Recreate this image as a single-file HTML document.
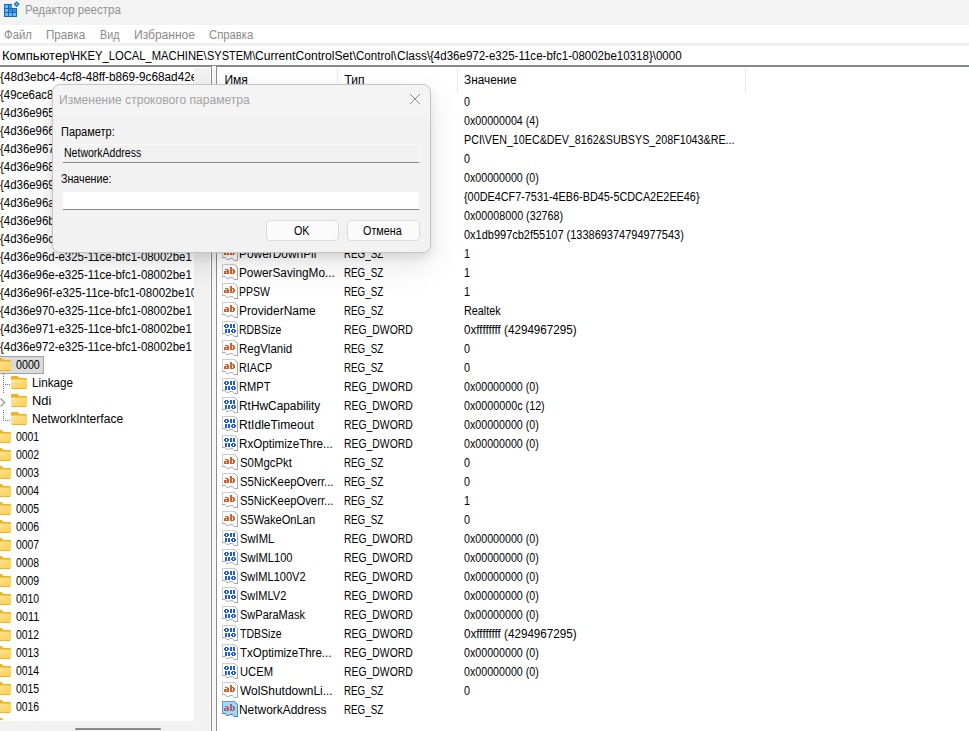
<!DOCTYPE html>
<html><head><meta charset="utf-8">
<style>
*{margin:0;padding:0;box-sizing:border-box}
html,body{width:969px;height:731px;overflow:hidden;background:#fff}
body{position:relative;font-family:"Liberation Sans",sans-serif;color:#000}
.a{position:absolute}
.t{position:absolute;white-space:nowrap;transform-origin:0 0;line-height:1}
#title{left:0;top:0;width:969px;height:25px;background:#f3f3f3}
#menu{left:0;top:25px;width:969px;height:18px;background:#fff}
#gap{left:0;top:43px;width:969px;height:3px;background:#f0f0f0}
#addr{left:0;top:46px;width:969px;height:19px;background:#fff}
#addrline{left:0;top:65px;width:969px;height:2px;background:#87888c}
#tree{left:0;top:67px;width:211px;height:664px;background:#fff}
#treestrip{left:194px;top:68px;width:16px;height:663px;background:#f2f2f2}
#treebot{left:0;top:721px;width:210px;height:10px;background:#f2f2f2}
#split1{left:211px;top:66px;width:1px;height:665px;background:#8c8c8f}
#split2{left:212px;top:66px;width:4px;height:665px;background:#f7f7f7}
#split3{left:216px;top:66px;width:1px;height:665px;background:#8c8c8f}
#list{left:217px;top:67px;width:752px;height:664px;background:#fff}
.tr{font-size:12.5px;transform:scaleX(.9)}
.ln{font-size:12.5px;transform:scaleX(.9)}
.lv{font-size:11.5px;transform:scaleX(.94)}
.hd{font-size:12px}
.sep{position:absolute;top:68px;width:1px;height:24px;background:#e6e9e9}
</style></head><body>
<svg width="0" height="0" style="position:absolute"><defs><linearGradient id="fg" x1="0" y1="0" x2="1" y2="1"><stop offset="0" stop-color="#fde4a0"/><stop offset="0.45" stop-color="#fcdc80"/><stop offset="0.55" stop-color="#fcd76a"/><stop offset="1" stop-color="#fbd25c"/></linearGradient></defs></svg>
<div id="title" class="a"></div>
<svg class="a" style="left:0;top:0" width="22" height="20" viewBox="0 0 22 20" shape-rendering="crispEdges">
 <path d="M4 4 H12 V8 H17 V17 H4 Z" fill="#0f6dc0"/>
 <rect x="5" y="5" width="3" height="3" fill="#6cb6f2"/><rect x="9" y="5" width="3" height="3" fill="#3f90da"/>
 <rect x="5" y="9" width="3" height="3" fill="#6cb6f2"/><rect x="9" y="9" width="3" height="3" fill="#3f90da"/><rect x="13" y="9" width="3" height="3" fill="#3f90da"/>
 <rect x="5" y="13" width="3" height="3" fill="#6cb6f2"/><rect x="9" y="13" width="3" height="3" fill="#6cb6f2"/><rect x="13" y="13" width="3" height="3" fill="#6cb6f2"/>
 <path d="M16.6 1.3 L19.6 4.3 L16.6 7.3 L13.6 4.3 Z" fill="#0f6dc0" shape-rendering="geometricPrecision"/>
 <path d="M16.6 2.8 L18.1 4.3 L16.6 5.8 L15.1 4.3 Z" fill="#6cb6f2" shape-rendering="geometricPrecision"/>
</svg>
<div id="menu" class="a"></div>
<div id="gap" class="a"></div>
<div id="addr" class="a"></div>
<div id="addrline" class="a"></div>
<div id="tree" class="a"></div>
<div id="treestrip" class="a"></div>
<div id="treebot" class="a"></div>
<div id="split1" class="a"></div>
<div id="split2" class="a"></div>
<div id="split3" class="a"></div>
<div id="list" class="a"></div>
<div class="a" style="left:0;top:67px;width:193.5px;height:654px;overflow:hidden"><div class="t" style="left:0.20px;top:4px;font-size:12.5px;transform:scaleX(0.9408);color:#000">{48d3ebc4-4cf8-48ff-b869-9c68ad42e</div>
<div class="t" style="left:0.20px;top:22px;font-size:12.5px;transform:scaleX(0.9146);color:#000">{49ce6ac8-6f86-11d2-b1e5-0080c72e7</div>
<div class="t" style="left:0.20px;top:40px;font-size:12.5px;transform:scaleX(0.9146);color:#000">{4d36e965-e325-11ce-bfc1-08002be1</div>
<div class="t" style="left:0.20px;top:58px;font-size:12.5px;transform:scaleX(0.9146);color:#000">{4d36e966-e325-11ce-bfc1-08002be1</div>
<div class="t" style="left:0.20px;top:76px;font-size:12.5px;transform:scaleX(0.9146);color:#000">{4d36e967-e325-11ce-bfc1-08002be1</div>
<div class="t" style="left:0.20px;top:94px;font-size:12.5px;transform:scaleX(0.9146);color:#000">{4d36e968-e325-11ce-bfc1-08002be1</div>
<div class="t" style="left:0.20px;top:112px;font-size:12.5px;transform:scaleX(0.9146);color:#000">{4d36e969-e325-11ce-bfc1-08002be1</div>
<div class="t" style="left:0.20px;top:130px;font-size:12.5px;transform:scaleX(0.9146);color:#000">{4d36e96a-e325-11ce-bfc1-08002be1</div>
<div class="t" style="left:0.20px;top:148px;font-size:12.5px;transform:scaleX(0.9146);color:#000">{4d36e96b-e325-11ce-bfc1-08002be1</div>
<div class="t" style="left:0.20px;top:166px;font-size:12.5px;transform:scaleX(0.9146);color:#000">{4d36e96c-e325-11ce-bfc1-08002be1</div>
<div class="t" style="left:0.20px;top:184px;font-size:12.5px;transform:scaleX(0.9146);color:#000">{4d36e96d-e325-11ce-bfc1-08002be1</div>
<div class="t" style="left:0.20px;top:202px;font-size:12.5px;transform:scaleX(0.9146);color:#000">{4d36e96e-e325-11ce-bfc1-08002be1</div>
<div class="t" style="left:0.20px;top:220px;font-size:12.5px;transform:scaleX(0.9255);color:#000">{4d36e96f-e325-11ce-bfc1-08002be10</div>
<div class="t" style="left:0.20px;top:238px;font-size:12.5px;transform:scaleX(0.9146);color:#000">{4d36e970-e325-11ce-bfc1-08002be1</div>
<div class="t" style="left:0.20px;top:256px;font-size:12.5px;transform:scaleX(0.9146);color:#000">{4d36e971-e325-11ce-bfc1-08002be1</div>
<div class="t" style="left:0.20px;top:274px;font-size:12.5px;transform:scaleX(0.9146);color:#000">{4d36e972-e325-11ce-bfc1-08002be1</div></div>
<div class="a" style="left:0px;top:356px;width:44px;height:18px;background:#dadada;border:1px solid #a3a3a3;border-left:none"></div>
<svg class="a" style="left:-5px;top:358px" width="16" height="13" viewBox="0 0 16 13"><path d="M0 1.2 Q0 0 1.2 0 H6.6 L8.4 1.9 H15 Q16 1.9 16 2.9 V4 H0Z" fill="#f0b21e"/><rect x="0" y="3.4" width="16" height="9" rx="0.8" fill="url(#fg)"/><rect x="0.8" y="12" width="14.4" height="1" fill="#efb425"/><rect x="1" y="4.2" width="3" height="1" fill="#fff4c4"/></svg>
<svg class="a" style="left:11px;top:376px" width="16" height="13" viewBox="0 0 16 13"><path d="M0 1.2 Q0 0 1.2 0 H6.6 L8.4 1.9 H15 Q16 1.9 16 2.9 V4 H0Z" fill="#f0b21e"/><rect x="0" y="3.4" width="16" height="9" rx="0.8" fill="url(#fg)"/><rect x="0.8" y="12" width="14.4" height="1" fill="#efb425"/><rect x="1" y="4.2" width="3" height="1" fill="#fff4c4"/></svg>
<svg class="a" style="left:11px;top:394px" width="16" height="13" viewBox="0 0 16 13"><path d="M0 1.2 Q0 0 1.2 0 H6.6 L8.4 1.9 H15 Q16 1.9 16 2.9 V4 H0Z" fill="#f0b21e"/><rect x="0" y="3.4" width="16" height="9" rx="0.8" fill="url(#fg)"/><rect x="0.8" y="12" width="14.4" height="1" fill="#efb425"/><rect x="1" y="4.2" width="3" height="1" fill="#fff4c4"/></svg>
<svg class="a" style="left:11px;top:412px" width="16" height="13" viewBox="0 0 16 13"><path d="M0 1.2 Q0 0 1.2 0 H6.6 L8.4 1.9 H15 Q16 1.9 16 2.9 V4 H0Z" fill="#f0b21e"/><rect x="0" y="3.4" width="16" height="9" rx="0.8" fill="url(#fg)"/><rect x="0.8" y="12" width="14.4" height="1" fill="#efb425"/><rect x="1" y="4.2" width="3" height="1" fill="#fff4c4"/></svg>
<svg class="a" style="left:-5px;top:430px" width="16" height="13" viewBox="0 0 16 13"><path d="M0 1.2 Q0 0 1.2 0 H6.6 L8.4 1.9 H15 Q16 1.9 16 2.9 V4 H0Z" fill="#f0b21e"/><rect x="0" y="3.4" width="16" height="9" rx="0.8" fill="url(#fg)"/><rect x="0.8" y="12" width="14.4" height="1" fill="#efb425"/><rect x="1" y="4.2" width="3" height="1" fill="#fff4c4"/></svg>
<svg class="a" style="left:-5px;top:448px" width="16" height="13" viewBox="0 0 16 13"><path d="M0 1.2 Q0 0 1.2 0 H6.6 L8.4 1.9 H15 Q16 1.9 16 2.9 V4 H0Z" fill="#f0b21e"/><rect x="0" y="3.4" width="16" height="9" rx="0.8" fill="url(#fg)"/><rect x="0.8" y="12" width="14.4" height="1" fill="#efb425"/><rect x="1" y="4.2" width="3" height="1" fill="#fff4c4"/></svg>
<svg class="a" style="left:-5px;top:466px" width="16" height="13" viewBox="0 0 16 13"><path d="M0 1.2 Q0 0 1.2 0 H6.6 L8.4 1.9 H15 Q16 1.9 16 2.9 V4 H0Z" fill="#f0b21e"/><rect x="0" y="3.4" width="16" height="9" rx="0.8" fill="url(#fg)"/><rect x="0.8" y="12" width="14.4" height="1" fill="#efb425"/><rect x="1" y="4.2" width="3" height="1" fill="#fff4c4"/></svg>
<svg class="a" style="left:-5px;top:484px" width="16" height="13" viewBox="0 0 16 13"><path d="M0 1.2 Q0 0 1.2 0 H6.6 L8.4 1.9 H15 Q16 1.9 16 2.9 V4 H0Z" fill="#f0b21e"/><rect x="0" y="3.4" width="16" height="9" rx="0.8" fill="url(#fg)"/><rect x="0.8" y="12" width="14.4" height="1" fill="#efb425"/><rect x="1" y="4.2" width="3" height="1" fill="#fff4c4"/></svg>
<svg class="a" style="left:-5px;top:502px" width="16" height="13" viewBox="0 0 16 13"><path d="M0 1.2 Q0 0 1.2 0 H6.6 L8.4 1.9 H15 Q16 1.9 16 2.9 V4 H0Z" fill="#f0b21e"/><rect x="0" y="3.4" width="16" height="9" rx="0.8" fill="url(#fg)"/><rect x="0.8" y="12" width="14.4" height="1" fill="#efb425"/><rect x="1" y="4.2" width="3" height="1" fill="#fff4c4"/></svg>
<svg class="a" style="left:-5px;top:520px" width="16" height="13" viewBox="0 0 16 13"><path d="M0 1.2 Q0 0 1.2 0 H6.6 L8.4 1.9 H15 Q16 1.9 16 2.9 V4 H0Z" fill="#f0b21e"/><rect x="0" y="3.4" width="16" height="9" rx="0.8" fill="url(#fg)"/><rect x="0.8" y="12" width="14.4" height="1" fill="#efb425"/><rect x="1" y="4.2" width="3" height="1" fill="#fff4c4"/></svg>
<svg class="a" style="left:-5px;top:538px" width="16" height="13" viewBox="0 0 16 13"><path d="M0 1.2 Q0 0 1.2 0 H6.6 L8.4 1.9 H15 Q16 1.9 16 2.9 V4 H0Z" fill="#f0b21e"/><rect x="0" y="3.4" width="16" height="9" rx="0.8" fill="url(#fg)"/><rect x="0.8" y="12" width="14.4" height="1" fill="#efb425"/><rect x="1" y="4.2" width="3" height="1" fill="#fff4c4"/></svg>
<svg class="a" style="left:-5px;top:556px" width="16" height="13" viewBox="0 0 16 13"><path d="M0 1.2 Q0 0 1.2 0 H6.6 L8.4 1.9 H15 Q16 1.9 16 2.9 V4 H0Z" fill="#f0b21e"/><rect x="0" y="3.4" width="16" height="9" rx="0.8" fill="url(#fg)"/><rect x="0.8" y="12" width="14.4" height="1" fill="#efb425"/><rect x="1" y="4.2" width="3" height="1" fill="#fff4c4"/></svg>
<svg class="a" style="left:-5px;top:574px" width="16" height="13" viewBox="0 0 16 13"><path d="M0 1.2 Q0 0 1.2 0 H6.6 L8.4 1.9 H15 Q16 1.9 16 2.9 V4 H0Z" fill="#f0b21e"/><rect x="0" y="3.4" width="16" height="9" rx="0.8" fill="url(#fg)"/><rect x="0.8" y="12" width="14.4" height="1" fill="#efb425"/><rect x="1" y="4.2" width="3" height="1" fill="#fff4c4"/></svg>
<svg class="a" style="left:-5px;top:592px" width="16" height="13" viewBox="0 0 16 13"><path d="M0 1.2 Q0 0 1.2 0 H6.6 L8.4 1.9 H15 Q16 1.9 16 2.9 V4 H0Z" fill="#f0b21e"/><rect x="0" y="3.4" width="16" height="9" rx="0.8" fill="url(#fg)"/><rect x="0.8" y="12" width="14.4" height="1" fill="#efb425"/><rect x="1" y="4.2" width="3" height="1" fill="#fff4c4"/></svg>
<svg class="a" style="left:-5px;top:610px" width="16" height="13" viewBox="0 0 16 13"><path d="M0 1.2 Q0 0 1.2 0 H6.6 L8.4 1.9 H15 Q16 1.9 16 2.9 V4 H0Z" fill="#f0b21e"/><rect x="0" y="3.4" width="16" height="9" rx="0.8" fill="url(#fg)"/><rect x="0.8" y="12" width="14.4" height="1" fill="#efb425"/><rect x="1" y="4.2" width="3" height="1" fill="#fff4c4"/></svg>
<svg class="a" style="left:-5px;top:628px" width="16" height="13" viewBox="0 0 16 13"><path d="M0 1.2 Q0 0 1.2 0 H6.6 L8.4 1.9 H15 Q16 1.9 16 2.9 V4 H0Z" fill="#f0b21e"/><rect x="0" y="3.4" width="16" height="9" rx="0.8" fill="url(#fg)"/><rect x="0.8" y="12" width="14.4" height="1" fill="#efb425"/><rect x="1" y="4.2" width="3" height="1" fill="#fff4c4"/></svg>
<svg class="a" style="left:-5px;top:646px" width="16" height="13" viewBox="0 0 16 13"><path d="M0 1.2 Q0 0 1.2 0 H6.6 L8.4 1.9 H15 Q16 1.9 16 2.9 V4 H0Z" fill="#f0b21e"/><rect x="0" y="3.4" width="16" height="9" rx="0.8" fill="url(#fg)"/><rect x="0.8" y="12" width="14.4" height="1" fill="#efb425"/><rect x="1" y="4.2" width="3" height="1" fill="#fff4c4"/></svg>
<svg class="a" style="left:-5px;top:664px" width="16" height="13" viewBox="0 0 16 13"><path d="M0 1.2 Q0 0 1.2 0 H6.6 L8.4 1.9 H15 Q16 1.9 16 2.9 V4 H0Z" fill="#f0b21e"/><rect x="0" y="3.4" width="16" height="9" rx="0.8" fill="url(#fg)"/><rect x="0.8" y="12" width="14.4" height="1" fill="#efb425"/><rect x="1" y="4.2" width="3" height="1" fill="#fff4c4"/></svg>
<svg class="a" style="left:-5px;top:682px" width="16" height="13" viewBox="0 0 16 13"><path d="M0 1.2 Q0 0 1.2 0 H6.6 L8.4 1.9 H15 Q16 1.9 16 2.9 V4 H0Z" fill="#f0b21e"/><rect x="0" y="3.4" width="16" height="9" rx="0.8" fill="url(#fg)"/><rect x="0.8" y="12" width="14.4" height="1" fill="#efb425"/><rect x="1" y="4.2" width="3" height="1" fill="#fff4c4"/></svg>
<svg class="a" style="left:-5px;top:700px" width="16" height="13" viewBox="0 0 16 13"><path d="M0 1.2 Q0 0 1.2 0 H6.6 L8.4 1.9 H15 Q16 1.9 16 2.9 V4 H0Z" fill="#f0b21e"/><rect x="0" y="3.4" width="16" height="9" rx="0.8" fill="url(#fg)"/><rect x="0.8" y="12" width="14.4" height="1" fill="#efb425"/><rect x="1" y="4.2" width="3" height="1" fill="#fff4c4"/></svg>
<div class="a" style="left:0;top:718px;width:20px;height:2px;overflow:hidden"><svg class="a" style="left:-5px;top:0px" width="16" height="13" viewBox="0 0 16 13"><path d="M0 1.2 Q0 0 1.2 0 H6.6 L8.4 1.9 H15 Q16 1.9 16 2.9 V4 H0Z" fill="#f0b21e"/><rect x="0" y="3.4" width="16" height="9" rx="0.8" fill="url(#fg)"/><rect x="0.8" y="12" width="14.4" height="1" fill="#efb425"/><rect x="1" y="4.2" width="3" height="1" fill="#fff4c4"/></svg></div>
<div class="a" style="left:3px;top:374px;width:1px;height:1px;background:#7d7383"></div><div class="a" style="left:3px;top:376px;width:1px;height:1px;background:#7d7383"></div><div class="a" style="left:3px;top:378px;width:1px;height:1px;background:#7d7383"></div><div class="a" style="left:3px;top:380px;width:1px;height:1px;background:#7d7383"></div><div class="a" style="left:3px;top:382px;width:1px;height:1px;background:#7d7383"></div><div class="a" style="left:3px;top:384px;width:1px;height:1px;background:#7d7383"></div><div class="a" style="left:3px;top:386px;width:1px;height:1px;background:#7d7383"></div><div class="a" style="left:3px;top:388px;width:1px;height:1px;background:#7d7383"></div><div class="a" style="left:3px;top:390px;width:1px;height:1px;background:#7d7383"></div><div class="a" style="left:3px;top:392px;width:1px;height:1px;background:#7d7383"></div><div class="a" style="left:5px;top:384px;width:1px;height:1px;background:#7d7383"></div><div class="a" style="left:7px;top:384px;width:1px;height:1px;background:#7d7383"></div><div class="a" style="left:9px;top:384px;width:1px;height:1px;background:#7d7383"></div>
<div class="a" style="left:3px;top:410px;width:1px;height:1px;background:#7d7383"></div><div class="a" style="left:3px;top:412px;width:1px;height:1px;background:#7d7383"></div><div class="a" style="left:3px;top:414px;width:1px;height:1px;background:#7d7383"></div><div class="a" style="left:3px;top:416px;width:1px;height:1px;background:#7d7383"></div><div class="a" style="left:3px;top:418px;width:1px;height:1px;background:#7d7383"></div><div class="a" style="left:3px;top:420px;width:1px;height:1px;background:#7d7383"></div><div class="a" style="left:5px;top:420px;width:1px;height:1px;background:#7d7383"></div><div class="a" style="left:7px;top:420px;width:1px;height:1px;background:#7d7383"></div><div class="a" style="left:9px;top:420px;width:1px;height:1px;background:#7d7383"></div>
<svg class="a" style="left:-1px;top:397px" width="8" height="11" viewBox="0 0 8 11"><path d="M1.5 1.5 L5.5 5.5 L1.5 9.5" fill="none" stroke="#9a9a9a" stroke-width="1.4"/></svg>
<svg class="a" style="left:222px;top:93px" width="17" height="17" viewBox="0 0 17 17"><path d="M0 0 H13 L16 3 V16 H12 L10.5 14 H8 L6.5 15 H4.5 L3 13 H0 Z" fill="#fff"/><path d="M0.5 13 V0.5 H12.5 M12.5 0.5 L15.5 3.5 V16" fill="none" stroke="#cdcdcd" stroke-width="1"/><path d="M15.5 3.5 V15.8" fill="none" stroke="#a9a9a9" stroke-width="1"/><path d="M0 12.5 H3.2 L4.7 14.5 H6.6 L8.1 13.5 H10.6 L12.1 15.5 H16" fill="none" stroke="#a9a9a9" stroke-width="1"/><path d="M12.5 0.5 L15.5 3.5" fill="none" stroke="#a9a9a9" stroke-width="1"/><g shape-rendering="crispEdges"><rect x="3" y="5" width="3" height="1" fill="#dc5c27"/><rect x="5" y="6" width="2" height="1" fill="#dc5c27"/><rect x="2" y="7" width="5" height="1" fill="#dc5c27"/><rect x="2" y="8" width="2" height="1" fill="#dc5c27"/><rect x="5" y="8" width="2" height="1" fill="#dc5c27"/><rect x="3" y="9" width="4" height="1" fill="#dc5c27"/><rect x="2" y="9" width="1" height="1" fill="#dc5c27"/><rect x="8" y="3" width="2" height="1" fill="#dc5c27"/><rect x="8" y="4" width="2" height="1" fill="#dc5c27"/><rect x="8" y="5" width="4" height="1" fill="#dc5c27"/><rect x="8" y="6" width="2" height="1" fill="#dc5c27"/><rect x="11" y="6" width="2" height="1" fill="#dc5c27"/><rect x="8" y="7" width="2" height="1" fill="#dc5c27"/><rect x="11" y="7" width="2" height="1" fill="#dc5c27"/><rect x="8" y="8" width="2" height="1" fill="#dc5c27"/><rect x="11" y="8" width="2" height="1" fill="#dc5c27"/><rect x="8" y="9" width="4" height="1" fill="#dc5c27"/></g></svg>
<svg class="a" style="left:222px;top:112px" width="17" height="17" viewBox="0 0 17 17"><path d="M0 0 H13 L16 3 V16 H12 L10.5 14 H8 L6.5 15 H4.5 L3 13 H0 Z" fill="#fff"/><path d="M0.5 13 V0.5 H12.5 M12.5 0.5 L15.5 3.5 V16" fill="none" stroke="#cdcdcd" stroke-width="1"/><path d="M15.5 3.5 V15.8" fill="none" stroke="#a9a9a9" stroke-width="1"/><path d="M0 12.5 H3.2 L4.7 14.5 H6.6 L8.1 13.5 H10.6 L12.1 15.5 H16" fill="none" stroke="#a9a9a9" stroke-width="1"/><path d="M12.5 0.5 L15.5 3.5" fill="none" stroke="#a9a9a9" stroke-width="1"/><g shape-rendering="crispEdges"><rect x="3" y="3" width="3" height="1" fill="#1f5ce0"/><rect x="8" y="3" width="2" height="1" fill="#1f5ce0"/><rect x="11" y="3" width="2" height="1" fill="#1f5ce0"/><rect x="2" y="4" width="2" height="1" fill="#1f5ce0"/><rect x="5" y="4" width="2" height="1" fill="#1f5ce0"/><rect x="8" y="4" width="2" height="1" fill="#1f5ce0"/><rect x="11" y="4" width="2" height="1" fill="#1f5ce0"/><rect x="2" y="5" width="2" height="1" fill="#1f5ce0"/><rect x="5" y="5" width="2" height="1" fill="#1f5ce0"/><rect x="8" y="5" width="2" height="1" fill="#1f5ce0"/><rect x="11" y="5" width="2" height="1" fill="#1f5ce0"/><rect x="3" y="6" width="3" height="1" fill="#1f5ce0"/><rect x="8" y="6" width="2" height="1" fill="#1f5ce0"/><rect x="11" y="6" width="2" height="1" fill="#1f5ce0"/><rect x="3" y="8" width="2" height="1" fill="#1f5ce0"/><rect x="6" y="8" width="2" height="1" fill="#1f5ce0"/><rect x="10" y="8" width="3" height="1" fill="#1f5ce0"/><rect x="3" y="9" width="2" height="1" fill="#1f5ce0"/><rect x="6" y="9" width="2" height="1" fill="#1f5ce0"/><rect x="9" y="9" width="2" height="1" fill="#1f5ce0"/><rect x="12" y="9" width="2" height="1" fill="#1f5ce0"/><rect x="3" y="10" width="2" height="1" fill="#1f5ce0"/><rect x="6" y="10" width="2" height="1" fill="#1f5ce0"/><rect x="9" y="10" width="2" height="1" fill="#1f5ce0"/><rect x="12" y="10" width="2" height="1" fill="#1f5ce0"/><rect x="3" y="11" width="2" height="1" fill="#1f5ce0"/><rect x="6" y="11" width="2" height="1" fill="#1f5ce0"/><rect x="10" y="11" width="3" height="1" fill="#1f5ce0"/></g></svg>
<svg class="a" style="left:222px;top:131px" width="17" height="17" viewBox="0 0 17 17"><path d="M0 0 H13 L16 3 V16 H12 L10.5 14 H8 L6.5 15 H4.5 L3 13 H0 Z" fill="#fff"/><path d="M0.5 13 V0.5 H12.5 M12.5 0.5 L15.5 3.5 V16" fill="none" stroke="#cdcdcd" stroke-width="1"/><path d="M15.5 3.5 V15.8" fill="none" stroke="#a9a9a9" stroke-width="1"/><path d="M0 12.5 H3.2 L4.7 14.5 H6.6 L8.1 13.5 H10.6 L12.1 15.5 H16" fill="none" stroke="#a9a9a9" stroke-width="1"/><path d="M12.5 0.5 L15.5 3.5" fill="none" stroke="#a9a9a9" stroke-width="1"/><g shape-rendering="crispEdges"><rect x="3" y="5" width="3" height="1" fill="#dc5c27"/><rect x="5" y="6" width="2" height="1" fill="#dc5c27"/><rect x="2" y="7" width="5" height="1" fill="#dc5c27"/><rect x="2" y="8" width="2" height="1" fill="#dc5c27"/><rect x="5" y="8" width="2" height="1" fill="#dc5c27"/><rect x="3" y="9" width="4" height="1" fill="#dc5c27"/><rect x="2" y="9" width="1" height="1" fill="#dc5c27"/><rect x="8" y="3" width="2" height="1" fill="#dc5c27"/><rect x="8" y="4" width="2" height="1" fill="#dc5c27"/><rect x="8" y="5" width="4" height="1" fill="#dc5c27"/><rect x="8" y="6" width="2" height="1" fill="#dc5c27"/><rect x="11" y="6" width="2" height="1" fill="#dc5c27"/><rect x="8" y="7" width="2" height="1" fill="#dc5c27"/><rect x="11" y="7" width="2" height="1" fill="#dc5c27"/><rect x="8" y="8" width="2" height="1" fill="#dc5c27"/><rect x="11" y="8" width="2" height="1" fill="#dc5c27"/><rect x="8" y="9" width="4" height="1" fill="#dc5c27"/></g></svg>
<svg class="a" style="left:222px;top:150px" width="17" height="17" viewBox="0 0 17 17"><path d="M0 0 H13 L16 3 V16 H12 L10.5 14 H8 L6.5 15 H4.5 L3 13 H0 Z" fill="#fff"/><path d="M0.5 13 V0.5 H12.5 M12.5 0.5 L15.5 3.5 V16" fill="none" stroke="#cdcdcd" stroke-width="1"/><path d="M15.5 3.5 V15.8" fill="none" stroke="#a9a9a9" stroke-width="1"/><path d="M0 12.5 H3.2 L4.7 14.5 H6.6 L8.1 13.5 H10.6 L12.1 15.5 H16" fill="none" stroke="#a9a9a9" stroke-width="1"/><path d="M12.5 0.5 L15.5 3.5" fill="none" stroke="#a9a9a9" stroke-width="1"/><g shape-rendering="crispEdges"><rect x="3" y="5" width="3" height="1" fill="#dc5c27"/><rect x="5" y="6" width="2" height="1" fill="#dc5c27"/><rect x="2" y="7" width="5" height="1" fill="#dc5c27"/><rect x="2" y="8" width="2" height="1" fill="#dc5c27"/><rect x="5" y="8" width="2" height="1" fill="#dc5c27"/><rect x="3" y="9" width="4" height="1" fill="#dc5c27"/><rect x="2" y="9" width="1" height="1" fill="#dc5c27"/><rect x="8" y="3" width="2" height="1" fill="#dc5c27"/><rect x="8" y="4" width="2" height="1" fill="#dc5c27"/><rect x="8" y="5" width="4" height="1" fill="#dc5c27"/><rect x="8" y="6" width="2" height="1" fill="#dc5c27"/><rect x="11" y="6" width="2" height="1" fill="#dc5c27"/><rect x="8" y="7" width="2" height="1" fill="#dc5c27"/><rect x="11" y="7" width="2" height="1" fill="#dc5c27"/><rect x="8" y="8" width="2" height="1" fill="#dc5c27"/><rect x="11" y="8" width="2" height="1" fill="#dc5c27"/><rect x="8" y="9" width="4" height="1" fill="#dc5c27"/></g></svg>
<svg class="a" style="left:222px;top:169px" width="17" height="17" viewBox="0 0 17 17"><path d="M0 0 H13 L16 3 V16 H12 L10.5 14 H8 L6.5 15 H4.5 L3 13 H0 Z" fill="#fff"/><path d="M0.5 13 V0.5 H12.5 M12.5 0.5 L15.5 3.5 V16" fill="none" stroke="#cdcdcd" stroke-width="1"/><path d="M15.5 3.5 V15.8" fill="none" stroke="#a9a9a9" stroke-width="1"/><path d="M0 12.5 H3.2 L4.7 14.5 H6.6 L8.1 13.5 H10.6 L12.1 15.5 H16" fill="none" stroke="#a9a9a9" stroke-width="1"/><path d="M12.5 0.5 L15.5 3.5" fill="none" stroke="#a9a9a9" stroke-width="1"/><g shape-rendering="crispEdges"><rect x="3" y="3" width="3" height="1" fill="#1f5ce0"/><rect x="8" y="3" width="2" height="1" fill="#1f5ce0"/><rect x="11" y="3" width="2" height="1" fill="#1f5ce0"/><rect x="2" y="4" width="2" height="1" fill="#1f5ce0"/><rect x="5" y="4" width="2" height="1" fill="#1f5ce0"/><rect x="8" y="4" width="2" height="1" fill="#1f5ce0"/><rect x="11" y="4" width="2" height="1" fill="#1f5ce0"/><rect x="2" y="5" width="2" height="1" fill="#1f5ce0"/><rect x="5" y="5" width="2" height="1" fill="#1f5ce0"/><rect x="8" y="5" width="2" height="1" fill="#1f5ce0"/><rect x="11" y="5" width="2" height="1" fill="#1f5ce0"/><rect x="3" y="6" width="3" height="1" fill="#1f5ce0"/><rect x="8" y="6" width="2" height="1" fill="#1f5ce0"/><rect x="11" y="6" width="2" height="1" fill="#1f5ce0"/><rect x="3" y="8" width="2" height="1" fill="#1f5ce0"/><rect x="6" y="8" width="2" height="1" fill="#1f5ce0"/><rect x="10" y="8" width="3" height="1" fill="#1f5ce0"/><rect x="3" y="9" width="2" height="1" fill="#1f5ce0"/><rect x="6" y="9" width="2" height="1" fill="#1f5ce0"/><rect x="9" y="9" width="2" height="1" fill="#1f5ce0"/><rect x="12" y="9" width="2" height="1" fill="#1f5ce0"/><rect x="3" y="10" width="2" height="1" fill="#1f5ce0"/><rect x="6" y="10" width="2" height="1" fill="#1f5ce0"/><rect x="9" y="10" width="2" height="1" fill="#1f5ce0"/><rect x="12" y="10" width="2" height="1" fill="#1f5ce0"/><rect x="3" y="11" width="2" height="1" fill="#1f5ce0"/><rect x="6" y="11" width="2" height="1" fill="#1f5ce0"/><rect x="10" y="11" width="3" height="1" fill="#1f5ce0"/></g></svg>
<svg class="a" style="left:222px;top:188px" width="17" height="17" viewBox="0 0 17 17"><path d="M0 0 H13 L16 3 V16 H12 L10.5 14 H8 L6.5 15 H4.5 L3 13 H0 Z" fill="#fff"/><path d="M0.5 13 V0.5 H12.5 M12.5 0.5 L15.5 3.5 V16" fill="none" stroke="#cdcdcd" stroke-width="1"/><path d="M15.5 3.5 V15.8" fill="none" stroke="#a9a9a9" stroke-width="1"/><path d="M0 12.5 H3.2 L4.7 14.5 H6.6 L8.1 13.5 H10.6 L12.1 15.5 H16" fill="none" stroke="#a9a9a9" stroke-width="1"/><path d="M12.5 0.5 L15.5 3.5" fill="none" stroke="#a9a9a9" stroke-width="1"/><g shape-rendering="crispEdges"><rect x="3" y="5" width="3" height="1" fill="#dc5c27"/><rect x="5" y="6" width="2" height="1" fill="#dc5c27"/><rect x="2" y="7" width="5" height="1" fill="#dc5c27"/><rect x="2" y="8" width="2" height="1" fill="#dc5c27"/><rect x="5" y="8" width="2" height="1" fill="#dc5c27"/><rect x="3" y="9" width="4" height="1" fill="#dc5c27"/><rect x="2" y="9" width="1" height="1" fill="#dc5c27"/><rect x="8" y="3" width="2" height="1" fill="#dc5c27"/><rect x="8" y="4" width="2" height="1" fill="#dc5c27"/><rect x="8" y="5" width="4" height="1" fill="#dc5c27"/><rect x="8" y="6" width="2" height="1" fill="#dc5c27"/><rect x="11" y="6" width="2" height="1" fill="#dc5c27"/><rect x="8" y="7" width="2" height="1" fill="#dc5c27"/><rect x="11" y="7" width="2" height="1" fill="#dc5c27"/><rect x="8" y="8" width="2" height="1" fill="#dc5c27"/><rect x="11" y="8" width="2" height="1" fill="#dc5c27"/><rect x="8" y="9" width="4" height="1" fill="#dc5c27"/></g></svg>
<svg class="a" style="left:222px;top:207px" width="17" height="17" viewBox="0 0 17 17"><path d="M0 0 H13 L16 3 V16 H12 L10.5 14 H8 L6.5 15 H4.5 L3 13 H0 Z" fill="#fff"/><path d="M0.5 13 V0.5 H12.5 M12.5 0.5 L15.5 3.5 V16" fill="none" stroke="#cdcdcd" stroke-width="1"/><path d="M15.5 3.5 V15.8" fill="none" stroke="#a9a9a9" stroke-width="1"/><path d="M0 12.5 H3.2 L4.7 14.5 H6.6 L8.1 13.5 H10.6 L12.1 15.5 H16" fill="none" stroke="#a9a9a9" stroke-width="1"/><path d="M12.5 0.5 L15.5 3.5" fill="none" stroke="#a9a9a9" stroke-width="1"/><g shape-rendering="crispEdges"><rect x="3" y="3" width="3" height="1" fill="#1f5ce0"/><rect x="8" y="3" width="2" height="1" fill="#1f5ce0"/><rect x="11" y="3" width="2" height="1" fill="#1f5ce0"/><rect x="2" y="4" width="2" height="1" fill="#1f5ce0"/><rect x="5" y="4" width="2" height="1" fill="#1f5ce0"/><rect x="8" y="4" width="2" height="1" fill="#1f5ce0"/><rect x="11" y="4" width="2" height="1" fill="#1f5ce0"/><rect x="2" y="5" width="2" height="1" fill="#1f5ce0"/><rect x="5" y="5" width="2" height="1" fill="#1f5ce0"/><rect x="8" y="5" width="2" height="1" fill="#1f5ce0"/><rect x="11" y="5" width="2" height="1" fill="#1f5ce0"/><rect x="3" y="6" width="3" height="1" fill="#1f5ce0"/><rect x="8" y="6" width="2" height="1" fill="#1f5ce0"/><rect x="11" y="6" width="2" height="1" fill="#1f5ce0"/><rect x="3" y="8" width="2" height="1" fill="#1f5ce0"/><rect x="6" y="8" width="2" height="1" fill="#1f5ce0"/><rect x="10" y="8" width="3" height="1" fill="#1f5ce0"/><rect x="3" y="9" width="2" height="1" fill="#1f5ce0"/><rect x="6" y="9" width="2" height="1" fill="#1f5ce0"/><rect x="9" y="9" width="2" height="1" fill="#1f5ce0"/><rect x="12" y="9" width="2" height="1" fill="#1f5ce0"/><rect x="3" y="10" width="2" height="1" fill="#1f5ce0"/><rect x="6" y="10" width="2" height="1" fill="#1f5ce0"/><rect x="9" y="10" width="2" height="1" fill="#1f5ce0"/><rect x="12" y="10" width="2" height="1" fill="#1f5ce0"/><rect x="3" y="11" width="2" height="1" fill="#1f5ce0"/><rect x="6" y="11" width="2" height="1" fill="#1f5ce0"/><rect x="10" y="11" width="3" height="1" fill="#1f5ce0"/></g></svg>
<svg class="a" style="left:222px;top:226px" width="17" height="17" viewBox="0 0 17 17"><path d="M0 0 H13 L16 3 V16 H12 L10.5 14 H8 L6.5 15 H4.5 L3 13 H0 Z" fill="#fff"/><path d="M0.5 13 V0.5 H12.5 M12.5 0.5 L15.5 3.5 V16" fill="none" stroke="#cdcdcd" stroke-width="1"/><path d="M15.5 3.5 V15.8" fill="none" stroke="#a9a9a9" stroke-width="1"/><path d="M0 12.5 H3.2 L4.7 14.5 H6.6 L8.1 13.5 H10.6 L12.1 15.5 H16" fill="none" stroke="#a9a9a9" stroke-width="1"/><path d="M12.5 0.5 L15.5 3.5" fill="none" stroke="#a9a9a9" stroke-width="1"/><g shape-rendering="crispEdges"><rect x="3" y="3" width="3" height="1" fill="#1f5ce0"/><rect x="8" y="3" width="2" height="1" fill="#1f5ce0"/><rect x="11" y="3" width="2" height="1" fill="#1f5ce0"/><rect x="2" y="4" width="2" height="1" fill="#1f5ce0"/><rect x="5" y="4" width="2" height="1" fill="#1f5ce0"/><rect x="8" y="4" width="2" height="1" fill="#1f5ce0"/><rect x="11" y="4" width="2" height="1" fill="#1f5ce0"/><rect x="2" y="5" width="2" height="1" fill="#1f5ce0"/><rect x="5" y="5" width="2" height="1" fill="#1f5ce0"/><rect x="8" y="5" width="2" height="1" fill="#1f5ce0"/><rect x="11" y="5" width="2" height="1" fill="#1f5ce0"/><rect x="3" y="6" width="3" height="1" fill="#1f5ce0"/><rect x="8" y="6" width="2" height="1" fill="#1f5ce0"/><rect x="11" y="6" width="2" height="1" fill="#1f5ce0"/><rect x="3" y="8" width="2" height="1" fill="#1f5ce0"/><rect x="6" y="8" width="2" height="1" fill="#1f5ce0"/><rect x="10" y="8" width="3" height="1" fill="#1f5ce0"/><rect x="3" y="9" width="2" height="1" fill="#1f5ce0"/><rect x="6" y="9" width="2" height="1" fill="#1f5ce0"/><rect x="9" y="9" width="2" height="1" fill="#1f5ce0"/><rect x="12" y="9" width="2" height="1" fill="#1f5ce0"/><rect x="3" y="10" width="2" height="1" fill="#1f5ce0"/><rect x="6" y="10" width="2" height="1" fill="#1f5ce0"/><rect x="9" y="10" width="2" height="1" fill="#1f5ce0"/><rect x="12" y="10" width="2" height="1" fill="#1f5ce0"/><rect x="3" y="11" width="2" height="1" fill="#1f5ce0"/><rect x="6" y="11" width="2" height="1" fill="#1f5ce0"/><rect x="10" y="11" width="3" height="1" fill="#1f5ce0"/></g></svg>
<svg class="a" style="left:222px;top:245px" width="17" height="17" viewBox="0 0 17 17"><path d="M0 0 H13 L16 3 V16 H12 L10.5 14 H8 L6.5 15 H4.5 L3 13 H0 Z" fill="#fff"/><path d="M0.5 13 V0.5 H12.5 M12.5 0.5 L15.5 3.5 V16" fill="none" stroke="#cdcdcd" stroke-width="1"/><path d="M15.5 3.5 V15.8" fill="none" stroke="#a9a9a9" stroke-width="1"/><path d="M0 12.5 H3.2 L4.7 14.5 H6.6 L8.1 13.5 H10.6 L12.1 15.5 H16" fill="none" stroke="#a9a9a9" stroke-width="1"/><path d="M12.5 0.5 L15.5 3.5" fill="none" stroke="#a9a9a9" stroke-width="1"/><g shape-rendering="crispEdges"><rect x="3" y="5" width="3" height="1" fill="#dc5c27"/><rect x="5" y="6" width="2" height="1" fill="#dc5c27"/><rect x="2" y="7" width="5" height="1" fill="#dc5c27"/><rect x="2" y="8" width="2" height="1" fill="#dc5c27"/><rect x="5" y="8" width="2" height="1" fill="#dc5c27"/><rect x="3" y="9" width="4" height="1" fill="#dc5c27"/><rect x="2" y="9" width="1" height="1" fill="#dc5c27"/><rect x="8" y="3" width="2" height="1" fill="#dc5c27"/><rect x="8" y="4" width="2" height="1" fill="#dc5c27"/><rect x="8" y="5" width="4" height="1" fill="#dc5c27"/><rect x="8" y="6" width="2" height="1" fill="#dc5c27"/><rect x="11" y="6" width="2" height="1" fill="#dc5c27"/><rect x="8" y="7" width="2" height="1" fill="#dc5c27"/><rect x="11" y="7" width="2" height="1" fill="#dc5c27"/><rect x="8" y="8" width="2" height="1" fill="#dc5c27"/><rect x="11" y="8" width="2" height="1" fill="#dc5c27"/><rect x="8" y="9" width="4" height="1" fill="#dc5c27"/></g></svg>
<svg class="a" style="left:222px;top:264px" width="17" height="17" viewBox="0 0 17 17"><path d="M0 0 H13 L16 3 V16 H12 L10.5 14 H8 L6.5 15 H4.5 L3 13 H0 Z" fill="#fff"/><path d="M0.5 13 V0.5 H12.5 M12.5 0.5 L15.5 3.5 V16" fill="none" stroke="#cdcdcd" stroke-width="1"/><path d="M15.5 3.5 V15.8" fill="none" stroke="#a9a9a9" stroke-width="1"/><path d="M0 12.5 H3.2 L4.7 14.5 H6.6 L8.1 13.5 H10.6 L12.1 15.5 H16" fill="none" stroke="#a9a9a9" stroke-width="1"/><path d="M12.5 0.5 L15.5 3.5" fill="none" stroke="#a9a9a9" stroke-width="1"/><g shape-rendering="crispEdges"><rect x="3" y="5" width="3" height="1" fill="#dc5c27"/><rect x="5" y="6" width="2" height="1" fill="#dc5c27"/><rect x="2" y="7" width="5" height="1" fill="#dc5c27"/><rect x="2" y="8" width="2" height="1" fill="#dc5c27"/><rect x="5" y="8" width="2" height="1" fill="#dc5c27"/><rect x="3" y="9" width="4" height="1" fill="#dc5c27"/><rect x="2" y="9" width="1" height="1" fill="#dc5c27"/><rect x="8" y="3" width="2" height="1" fill="#dc5c27"/><rect x="8" y="4" width="2" height="1" fill="#dc5c27"/><rect x="8" y="5" width="4" height="1" fill="#dc5c27"/><rect x="8" y="6" width="2" height="1" fill="#dc5c27"/><rect x="11" y="6" width="2" height="1" fill="#dc5c27"/><rect x="8" y="7" width="2" height="1" fill="#dc5c27"/><rect x="11" y="7" width="2" height="1" fill="#dc5c27"/><rect x="8" y="8" width="2" height="1" fill="#dc5c27"/><rect x="11" y="8" width="2" height="1" fill="#dc5c27"/><rect x="8" y="9" width="4" height="1" fill="#dc5c27"/></g></svg>
<svg class="a" style="left:222px;top:283px" width="17" height="17" viewBox="0 0 17 17"><path d="M0 0 H13 L16 3 V16 H12 L10.5 14 H8 L6.5 15 H4.5 L3 13 H0 Z" fill="#fff"/><path d="M0.5 13 V0.5 H12.5 M12.5 0.5 L15.5 3.5 V16" fill="none" stroke="#cdcdcd" stroke-width="1"/><path d="M15.5 3.5 V15.8" fill="none" stroke="#a9a9a9" stroke-width="1"/><path d="M0 12.5 H3.2 L4.7 14.5 H6.6 L8.1 13.5 H10.6 L12.1 15.5 H16" fill="none" stroke="#a9a9a9" stroke-width="1"/><path d="M12.5 0.5 L15.5 3.5" fill="none" stroke="#a9a9a9" stroke-width="1"/><g shape-rendering="crispEdges"><rect x="3" y="5" width="3" height="1" fill="#dc5c27"/><rect x="5" y="6" width="2" height="1" fill="#dc5c27"/><rect x="2" y="7" width="5" height="1" fill="#dc5c27"/><rect x="2" y="8" width="2" height="1" fill="#dc5c27"/><rect x="5" y="8" width="2" height="1" fill="#dc5c27"/><rect x="3" y="9" width="4" height="1" fill="#dc5c27"/><rect x="2" y="9" width="1" height="1" fill="#dc5c27"/><rect x="8" y="3" width="2" height="1" fill="#dc5c27"/><rect x="8" y="4" width="2" height="1" fill="#dc5c27"/><rect x="8" y="5" width="4" height="1" fill="#dc5c27"/><rect x="8" y="6" width="2" height="1" fill="#dc5c27"/><rect x="11" y="6" width="2" height="1" fill="#dc5c27"/><rect x="8" y="7" width="2" height="1" fill="#dc5c27"/><rect x="11" y="7" width="2" height="1" fill="#dc5c27"/><rect x="8" y="8" width="2" height="1" fill="#dc5c27"/><rect x="11" y="8" width="2" height="1" fill="#dc5c27"/><rect x="8" y="9" width="4" height="1" fill="#dc5c27"/></g></svg>
<svg class="a" style="left:222px;top:302px" width="17" height="17" viewBox="0 0 17 17"><path d="M0 0 H13 L16 3 V16 H12 L10.5 14 H8 L6.5 15 H4.5 L3 13 H0 Z" fill="#fff"/><path d="M0.5 13 V0.5 H12.5 M12.5 0.5 L15.5 3.5 V16" fill="none" stroke="#cdcdcd" stroke-width="1"/><path d="M15.5 3.5 V15.8" fill="none" stroke="#a9a9a9" stroke-width="1"/><path d="M0 12.5 H3.2 L4.7 14.5 H6.6 L8.1 13.5 H10.6 L12.1 15.5 H16" fill="none" stroke="#a9a9a9" stroke-width="1"/><path d="M12.5 0.5 L15.5 3.5" fill="none" stroke="#a9a9a9" stroke-width="1"/><g shape-rendering="crispEdges"><rect x="3" y="5" width="3" height="1" fill="#dc5c27"/><rect x="5" y="6" width="2" height="1" fill="#dc5c27"/><rect x="2" y="7" width="5" height="1" fill="#dc5c27"/><rect x="2" y="8" width="2" height="1" fill="#dc5c27"/><rect x="5" y="8" width="2" height="1" fill="#dc5c27"/><rect x="3" y="9" width="4" height="1" fill="#dc5c27"/><rect x="2" y="9" width="1" height="1" fill="#dc5c27"/><rect x="8" y="3" width="2" height="1" fill="#dc5c27"/><rect x="8" y="4" width="2" height="1" fill="#dc5c27"/><rect x="8" y="5" width="4" height="1" fill="#dc5c27"/><rect x="8" y="6" width="2" height="1" fill="#dc5c27"/><rect x="11" y="6" width="2" height="1" fill="#dc5c27"/><rect x="8" y="7" width="2" height="1" fill="#dc5c27"/><rect x="11" y="7" width="2" height="1" fill="#dc5c27"/><rect x="8" y="8" width="2" height="1" fill="#dc5c27"/><rect x="11" y="8" width="2" height="1" fill="#dc5c27"/><rect x="8" y="9" width="4" height="1" fill="#dc5c27"/></g></svg>
<svg class="a" style="left:222px;top:321px" width="17" height="17" viewBox="0 0 17 17"><path d="M0 0 H13 L16 3 V16 H12 L10.5 14 H8 L6.5 15 H4.5 L3 13 H0 Z" fill="#fff"/><path d="M0.5 13 V0.5 H12.5 M12.5 0.5 L15.5 3.5 V16" fill="none" stroke="#cdcdcd" stroke-width="1"/><path d="M15.5 3.5 V15.8" fill="none" stroke="#a9a9a9" stroke-width="1"/><path d="M0 12.5 H3.2 L4.7 14.5 H6.6 L8.1 13.5 H10.6 L12.1 15.5 H16" fill="none" stroke="#a9a9a9" stroke-width="1"/><path d="M12.5 0.5 L15.5 3.5" fill="none" stroke="#a9a9a9" stroke-width="1"/><g shape-rendering="crispEdges"><rect x="3" y="3" width="3" height="1" fill="#1f5ce0"/><rect x="8" y="3" width="2" height="1" fill="#1f5ce0"/><rect x="11" y="3" width="2" height="1" fill="#1f5ce0"/><rect x="2" y="4" width="2" height="1" fill="#1f5ce0"/><rect x="5" y="4" width="2" height="1" fill="#1f5ce0"/><rect x="8" y="4" width="2" height="1" fill="#1f5ce0"/><rect x="11" y="4" width="2" height="1" fill="#1f5ce0"/><rect x="2" y="5" width="2" height="1" fill="#1f5ce0"/><rect x="5" y="5" width="2" height="1" fill="#1f5ce0"/><rect x="8" y="5" width="2" height="1" fill="#1f5ce0"/><rect x="11" y="5" width="2" height="1" fill="#1f5ce0"/><rect x="3" y="6" width="3" height="1" fill="#1f5ce0"/><rect x="8" y="6" width="2" height="1" fill="#1f5ce0"/><rect x="11" y="6" width="2" height="1" fill="#1f5ce0"/><rect x="3" y="8" width="2" height="1" fill="#1f5ce0"/><rect x="6" y="8" width="2" height="1" fill="#1f5ce0"/><rect x="10" y="8" width="3" height="1" fill="#1f5ce0"/><rect x="3" y="9" width="2" height="1" fill="#1f5ce0"/><rect x="6" y="9" width="2" height="1" fill="#1f5ce0"/><rect x="9" y="9" width="2" height="1" fill="#1f5ce0"/><rect x="12" y="9" width="2" height="1" fill="#1f5ce0"/><rect x="3" y="10" width="2" height="1" fill="#1f5ce0"/><rect x="6" y="10" width="2" height="1" fill="#1f5ce0"/><rect x="9" y="10" width="2" height="1" fill="#1f5ce0"/><rect x="12" y="10" width="2" height="1" fill="#1f5ce0"/><rect x="3" y="11" width="2" height="1" fill="#1f5ce0"/><rect x="6" y="11" width="2" height="1" fill="#1f5ce0"/><rect x="10" y="11" width="3" height="1" fill="#1f5ce0"/></g></svg>
<svg class="a" style="left:222px;top:340px" width="17" height="17" viewBox="0 0 17 17"><path d="M0 0 H13 L16 3 V16 H12 L10.5 14 H8 L6.5 15 H4.5 L3 13 H0 Z" fill="#fff"/><path d="M0.5 13 V0.5 H12.5 M12.5 0.5 L15.5 3.5 V16" fill="none" stroke="#cdcdcd" stroke-width="1"/><path d="M15.5 3.5 V15.8" fill="none" stroke="#a9a9a9" stroke-width="1"/><path d="M0 12.5 H3.2 L4.7 14.5 H6.6 L8.1 13.5 H10.6 L12.1 15.5 H16" fill="none" stroke="#a9a9a9" stroke-width="1"/><path d="M12.5 0.5 L15.5 3.5" fill="none" stroke="#a9a9a9" stroke-width="1"/><g shape-rendering="crispEdges"><rect x="3" y="5" width="3" height="1" fill="#dc5c27"/><rect x="5" y="6" width="2" height="1" fill="#dc5c27"/><rect x="2" y="7" width="5" height="1" fill="#dc5c27"/><rect x="2" y="8" width="2" height="1" fill="#dc5c27"/><rect x="5" y="8" width="2" height="1" fill="#dc5c27"/><rect x="3" y="9" width="4" height="1" fill="#dc5c27"/><rect x="2" y="9" width="1" height="1" fill="#dc5c27"/><rect x="8" y="3" width="2" height="1" fill="#dc5c27"/><rect x="8" y="4" width="2" height="1" fill="#dc5c27"/><rect x="8" y="5" width="4" height="1" fill="#dc5c27"/><rect x="8" y="6" width="2" height="1" fill="#dc5c27"/><rect x="11" y="6" width="2" height="1" fill="#dc5c27"/><rect x="8" y="7" width="2" height="1" fill="#dc5c27"/><rect x="11" y="7" width="2" height="1" fill="#dc5c27"/><rect x="8" y="8" width="2" height="1" fill="#dc5c27"/><rect x="11" y="8" width="2" height="1" fill="#dc5c27"/><rect x="8" y="9" width="4" height="1" fill="#dc5c27"/></g></svg>
<svg class="a" style="left:222px;top:359px" width="17" height="17" viewBox="0 0 17 17"><path d="M0 0 H13 L16 3 V16 H12 L10.5 14 H8 L6.5 15 H4.5 L3 13 H0 Z" fill="#fff"/><path d="M0.5 13 V0.5 H12.5 M12.5 0.5 L15.5 3.5 V16" fill="none" stroke="#cdcdcd" stroke-width="1"/><path d="M15.5 3.5 V15.8" fill="none" stroke="#a9a9a9" stroke-width="1"/><path d="M0 12.5 H3.2 L4.7 14.5 H6.6 L8.1 13.5 H10.6 L12.1 15.5 H16" fill="none" stroke="#a9a9a9" stroke-width="1"/><path d="M12.5 0.5 L15.5 3.5" fill="none" stroke="#a9a9a9" stroke-width="1"/><g shape-rendering="crispEdges"><rect x="3" y="5" width="3" height="1" fill="#dc5c27"/><rect x="5" y="6" width="2" height="1" fill="#dc5c27"/><rect x="2" y="7" width="5" height="1" fill="#dc5c27"/><rect x="2" y="8" width="2" height="1" fill="#dc5c27"/><rect x="5" y="8" width="2" height="1" fill="#dc5c27"/><rect x="3" y="9" width="4" height="1" fill="#dc5c27"/><rect x="2" y="9" width="1" height="1" fill="#dc5c27"/><rect x="8" y="3" width="2" height="1" fill="#dc5c27"/><rect x="8" y="4" width="2" height="1" fill="#dc5c27"/><rect x="8" y="5" width="4" height="1" fill="#dc5c27"/><rect x="8" y="6" width="2" height="1" fill="#dc5c27"/><rect x="11" y="6" width="2" height="1" fill="#dc5c27"/><rect x="8" y="7" width="2" height="1" fill="#dc5c27"/><rect x="11" y="7" width="2" height="1" fill="#dc5c27"/><rect x="8" y="8" width="2" height="1" fill="#dc5c27"/><rect x="11" y="8" width="2" height="1" fill="#dc5c27"/><rect x="8" y="9" width="4" height="1" fill="#dc5c27"/></g></svg>
<svg class="a" style="left:222px;top:378px" width="17" height="17" viewBox="0 0 17 17"><path d="M0 0 H13 L16 3 V16 H12 L10.5 14 H8 L6.5 15 H4.5 L3 13 H0 Z" fill="#fff"/><path d="M0.5 13 V0.5 H12.5 M12.5 0.5 L15.5 3.5 V16" fill="none" stroke="#cdcdcd" stroke-width="1"/><path d="M15.5 3.5 V15.8" fill="none" stroke="#a9a9a9" stroke-width="1"/><path d="M0 12.5 H3.2 L4.7 14.5 H6.6 L8.1 13.5 H10.6 L12.1 15.5 H16" fill="none" stroke="#a9a9a9" stroke-width="1"/><path d="M12.5 0.5 L15.5 3.5" fill="none" stroke="#a9a9a9" stroke-width="1"/><g shape-rendering="crispEdges"><rect x="3" y="3" width="3" height="1" fill="#1f5ce0"/><rect x="8" y="3" width="2" height="1" fill="#1f5ce0"/><rect x="11" y="3" width="2" height="1" fill="#1f5ce0"/><rect x="2" y="4" width="2" height="1" fill="#1f5ce0"/><rect x="5" y="4" width="2" height="1" fill="#1f5ce0"/><rect x="8" y="4" width="2" height="1" fill="#1f5ce0"/><rect x="11" y="4" width="2" height="1" fill="#1f5ce0"/><rect x="2" y="5" width="2" height="1" fill="#1f5ce0"/><rect x="5" y="5" width="2" height="1" fill="#1f5ce0"/><rect x="8" y="5" width="2" height="1" fill="#1f5ce0"/><rect x="11" y="5" width="2" height="1" fill="#1f5ce0"/><rect x="3" y="6" width="3" height="1" fill="#1f5ce0"/><rect x="8" y="6" width="2" height="1" fill="#1f5ce0"/><rect x="11" y="6" width="2" height="1" fill="#1f5ce0"/><rect x="3" y="8" width="2" height="1" fill="#1f5ce0"/><rect x="6" y="8" width="2" height="1" fill="#1f5ce0"/><rect x="10" y="8" width="3" height="1" fill="#1f5ce0"/><rect x="3" y="9" width="2" height="1" fill="#1f5ce0"/><rect x="6" y="9" width="2" height="1" fill="#1f5ce0"/><rect x="9" y="9" width="2" height="1" fill="#1f5ce0"/><rect x="12" y="9" width="2" height="1" fill="#1f5ce0"/><rect x="3" y="10" width="2" height="1" fill="#1f5ce0"/><rect x="6" y="10" width="2" height="1" fill="#1f5ce0"/><rect x="9" y="10" width="2" height="1" fill="#1f5ce0"/><rect x="12" y="10" width="2" height="1" fill="#1f5ce0"/><rect x="3" y="11" width="2" height="1" fill="#1f5ce0"/><rect x="6" y="11" width="2" height="1" fill="#1f5ce0"/><rect x="10" y="11" width="3" height="1" fill="#1f5ce0"/></g></svg>
<svg class="a" style="left:222px;top:397px" width="17" height="17" viewBox="0 0 17 17"><path d="M0 0 H13 L16 3 V16 H12 L10.5 14 H8 L6.5 15 H4.5 L3 13 H0 Z" fill="#fff"/><path d="M0.5 13 V0.5 H12.5 M12.5 0.5 L15.5 3.5 V16" fill="none" stroke="#cdcdcd" stroke-width="1"/><path d="M15.5 3.5 V15.8" fill="none" stroke="#a9a9a9" stroke-width="1"/><path d="M0 12.5 H3.2 L4.7 14.5 H6.6 L8.1 13.5 H10.6 L12.1 15.5 H16" fill="none" stroke="#a9a9a9" stroke-width="1"/><path d="M12.5 0.5 L15.5 3.5" fill="none" stroke="#a9a9a9" stroke-width="1"/><g shape-rendering="crispEdges"><rect x="3" y="3" width="3" height="1" fill="#1f5ce0"/><rect x="8" y="3" width="2" height="1" fill="#1f5ce0"/><rect x="11" y="3" width="2" height="1" fill="#1f5ce0"/><rect x="2" y="4" width="2" height="1" fill="#1f5ce0"/><rect x="5" y="4" width="2" height="1" fill="#1f5ce0"/><rect x="8" y="4" width="2" height="1" fill="#1f5ce0"/><rect x="11" y="4" width="2" height="1" fill="#1f5ce0"/><rect x="2" y="5" width="2" height="1" fill="#1f5ce0"/><rect x="5" y="5" width="2" height="1" fill="#1f5ce0"/><rect x="8" y="5" width="2" height="1" fill="#1f5ce0"/><rect x="11" y="5" width="2" height="1" fill="#1f5ce0"/><rect x="3" y="6" width="3" height="1" fill="#1f5ce0"/><rect x="8" y="6" width="2" height="1" fill="#1f5ce0"/><rect x="11" y="6" width="2" height="1" fill="#1f5ce0"/><rect x="3" y="8" width="2" height="1" fill="#1f5ce0"/><rect x="6" y="8" width="2" height="1" fill="#1f5ce0"/><rect x="10" y="8" width="3" height="1" fill="#1f5ce0"/><rect x="3" y="9" width="2" height="1" fill="#1f5ce0"/><rect x="6" y="9" width="2" height="1" fill="#1f5ce0"/><rect x="9" y="9" width="2" height="1" fill="#1f5ce0"/><rect x="12" y="9" width="2" height="1" fill="#1f5ce0"/><rect x="3" y="10" width="2" height="1" fill="#1f5ce0"/><rect x="6" y="10" width="2" height="1" fill="#1f5ce0"/><rect x="9" y="10" width="2" height="1" fill="#1f5ce0"/><rect x="12" y="10" width="2" height="1" fill="#1f5ce0"/><rect x="3" y="11" width="2" height="1" fill="#1f5ce0"/><rect x="6" y="11" width="2" height="1" fill="#1f5ce0"/><rect x="10" y="11" width="3" height="1" fill="#1f5ce0"/></g></svg>
<svg class="a" style="left:222px;top:416px" width="17" height="17" viewBox="0 0 17 17"><path d="M0 0 H13 L16 3 V16 H12 L10.5 14 H8 L6.5 15 H4.5 L3 13 H0 Z" fill="#fff"/><path d="M0.5 13 V0.5 H12.5 M12.5 0.5 L15.5 3.5 V16" fill="none" stroke="#cdcdcd" stroke-width="1"/><path d="M15.5 3.5 V15.8" fill="none" stroke="#a9a9a9" stroke-width="1"/><path d="M0 12.5 H3.2 L4.7 14.5 H6.6 L8.1 13.5 H10.6 L12.1 15.5 H16" fill="none" stroke="#a9a9a9" stroke-width="1"/><path d="M12.5 0.5 L15.5 3.5" fill="none" stroke="#a9a9a9" stroke-width="1"/><g shape-rendering="crispEdges"><rect x="3" y="3" width="3" height="1" fill="#1f5ce0"/><rect x="8" y="3" width="2" height="1" fill="#1f5ce0"/><rect x="11" y="3" width="2" height="1" fill="#1f5ce0"/><rect x="2" y="4" width="2" height="1" fill="#1f5ce0"/><rect x="5" y="4" width="2" height="1" fill="#1f5ce0"/><rect x="8" y="4" width="2" height="1" fill="#1f5ce0"/><rect x="11" y="4" width="2" height="1" fill="#1f5ce0"/><rect x="2" y="5" width="2" height="1" fill="#1f5ce0"/><rect x="5" y="5" width="2" height="1" fill="#1f5ce0"/><rect x="8" y="5" width="2" height="1" fill="#1f5ce0"/><rect x="11" y="5" width="2" height="1" fill="#1f5ce0"/><rect x="3" y="6" width="3" height="1" fill="#1f5ce0"/><rect x="8" y="6" width="2" height="1" fill="#1f5ce0"/><rect x="11" y="6" width="2" height="1" fill="#1f5ce0"/><rect x="3" y="8" width="2" height="1" fill="#1f5ce0"/><rect x="6" y="8" width="2" height="1" fill="#1f5ce0"/><rect x="10" y="8" width="3" height="1" fill="#1f5ce0"/><rect x="3" y="9" width="2" height="1" fill="#1f5ce0"/><rect x="6" y="9" width="2" height="1" fill="#1f5ce0"/><rect x="9" y="9" width="2" height="1" fill="#1f5ce0"/><rect x="12" y="9" width="2" height="1" fill="#1f5ce0"/><rect x="3" y="10" width="2" height="1" fill="#1f5ce0"/><rect x="6" y="10" width="2" height="1" fill="#1f5ce0"/><rect x="9" y="10" width="2" height="1" fill="#1f5ce0"/><rect x="12" y="10" width="2" height="1" fill="#1f5ce0"/><rect x="3" y="11" width="2" height="1" fill="#1f5ce0"/><rect x="6" y="11" width="2" height="1" fill="#1f5ce0"/><rect x="10" y="11" width="3" height="1" fill="#1f5ce0"/></g></svg>
<svg class="a" style="left:222px;top:435px" width="17" height="17" viewBox="0 0 17 17"><path d="M0 0 H13 L16 3 V16 H12 L10.5 14 H8 L6.5 15 H4.5 L3 13 H0 Z" fill="#fff"/><path d="M0.5 13 V0.5 H12.5 M12.5 0.5 L15.5 3.5 V16" fill="none" stroke="#cdcdcd" stroke-width="1"/><path d="M15.5 3.5 V15.8" fill="none" stroke="#a9a9a9" stroke-width="1"/><path d="M0 12.5 H3.2 L4.7 14.5 H6.6 L8.1 13.5 H10.6 L12.1 15.5 H16" fill="none" stroke="#a9a9a9" stroke-width="1"/><path d="M12.5 0.5 L15.5 3.5" fill="none" stroke="#a9a9a9" stroke-width="1"/><g shape-rendering="crispEdges"><rect x="3" y="3" width="3" height="1" fill="#1f5ce0"/><rect x="8" y="3" width="2" height="1" fill="#1f5ce0"/><rect x="11" y="3" width="2" height="1" fill="#1f5ce0"/><rect x="2" y="4" width="2" height="1" fill="#1f5ce0"/><rect x="5" y="4" width="2" height="1" fill="#1f5ce0"/><rect x="8" y="4" width="2" height="1" fill="#1f5ce0"/><rect x="11" y="4" width="2" height="1" fill="#1f5ce0"/><rect x="2" y="5" width="2" height="1" fill="#1f5ce0"/><rect x="5" y="5" width="2" height="1" fill="#1f5ce0"/><rect x="8" y="5" width="2" height="1" fill="#1f5ce0"/><rect x="11" y="5" width="2" height="1" fill="#1f5ce0"/><rect x="3" y="6" width="3" height="1" fill="#1f5ce0"/><rect x="8" y="6" width="2" height="1" fill="#1f5ce0"/><rect x="11" y="6" width="2" height="1" fill="#1f5ce0"/><rect x="3" y="8" width="2" height="1" fill="#1f5ce0"/><rect x="6" y="8" width="2" height="1" fill="#1f5ce0"/><rect x="10" y="8" width="3" height="1" fill="#1f5ce0"/><rect x="3" y="9" width="2" height="1" fill="#1f5ce0"/><rect x="6" y="9" width="2" height="1" fill="#1f5ce0"/><rect x="9" y="9" width="2" height="1" fill="#1f5ce0"/><rect x="12" y="9" width="2" height="1" fill="#1f5ce0"/><rect x="3" y="10" width="2" height="1" fill="#1f5ce0"/><rect x="6" y="10" width="2" height="1" fill="#1f5ce0"/><rect x="9" y="10" width="2" height="1" fill="#1f5ce0"/><rect x="12" y="10" width="2" height="1" fill="#1f5ce0"/><rect x="3" y="11" width="2" height="1" fill="#1f5ce0"/><rect x="6" y="11" width="2" height="1" fill="#1f5ce0"/><rect x="10" y="11" width="3" height="1" fill="#1f5ce0"/></g></svg>
<svg class="a" style="left:222px;top:454px" width="17" height="17" viewBox="0 0 17 17"><path d="M0 0 H13 L16 3 V16 H12 L10.5 14 H8 L6.5 15 H4.5 L3 13 H0 Z" fill="#fff"/><path d="M0.5 13 V0.5 H12.5 M12.5 0.5 L15.5 3.5 V16" fill="none" stroke="#cdcdcd" stroke-width="1"/><path d="M15.5 3.5 V15.8" fill="none" stroke="#a9a9a9" stroke-width="1"/><path d="M0 12.5 H3.2 L4.7 14.5 H6.6 L8.1 13.5 H10.6 L12.1 15.5 H16" fill="none" stroke="#a9a9a9" stroke-width="1"/><path d="M12.5 0.5 L15.5 3.5" fill="none" stroke="#a9a9a9" stroke-width="1"/><g shape-rendering="crispEdges"><rect x="3" y="5" width="3" height="1" fill="#dc5c27"/><rect x="5" y="6" width="2" height="1" fill="#dc5c27"/><rect x="2" y="7" width="5" height="1" fill="#dc5c27"/><rect x="2" y="8" width="2" height="1" fill="#dc5c27"/><rect x="5" y="8" width="2" height="1" fill="#dc5c27"/><rect x="3" y="9" width="4" height="1" fill="#dc5c27"/><rect x="2" y="9" width="1" height="1" fill="#dc5c27"/><rect x="8" y="3" width="2" height="1" fill="#dc5c27"/><rect x="8" y="4" width="2" height="1" fill="#dc5c27"/><rect x="8" y="5" width="4" height="1" fill="#dc5c27"/><rect x="8" y="6" width="2" height="1" fill="#dc5c27"/><rect x="11" y="6" width="2" height="1" fill="#dc5c27"/><rect x="8" y="7" width="2" height="1" fill="#dc5c27"/><rect x="11" y="7" width="2" height="1" fill="#dc5c27"/><rect x="8" y="8" width="2" height="1" fill="#dc5c27"/><rect x="11" y="8" width="2" height="1" fill="#dc5c27"/><rect x="8" y="9" width="4" height="1" fill="#dc5c27"/></g></svg>
<svg class="a" style="left:222px;top:473px" width="17" height="17" viewBox="0 0 17 17"><path d="M0 0 H13 L16 3 V16 H12 L10.5 14 H8 L6.5 15 H4.5 L3 13 H0 Z" fill="#fff"/><path d="M0.5 13 V0.5 H12.5 M12.5 0.5 L15.5 3.5 V16" fill="none" stroke="#cdcdcd" stroke-width="1"/><path d="M15.5 3.5 V15.8" fill="none" stroke="#a9a9a9" stroke-width="1"/><path d="M0 12.5 H3.2 L4.7 14.5 H6.6 L8.1 13.5 H10.6 L12.1 15.5 H16" fill="none" stroke="#a9a9a9" stroke-width="1"/><path d="M12.5 0.5 L15.5 3.5" fill="none" stroke="#a9a9a9" stroke-width="1"/><g shape-rendering="crispEdges"><rect x="3" y="5" width="3" height="1" fill="#dc5c27"/><rect x="5" y="6" width="2" height="1" fill="#dc5c27"/><rect x="2" y="7" width="5" height="1" fill="#dc5c27"/><rect x="2" y="8" width="2" height="1" fill="#dc5c27"/><rect x="5" y="8" width="2" height="1" fill="#dc5c27"/><rect x="3" y="9" width="4" height="1" fill="#dc5c27"/><rect x="2" y="9" width="1" height="1" fill="#dc5c27"/><rect x="8" y="3" width="2" height="1" fill="#dc5c27"/><rect x="8" y="4" width="2" height="1" fill="#dc5c27"/><rect x="8" y="5" width="4" height="1" fill="#dc5c27"/><rect x="8" y="6" width="2" height="1" fill="#dc5c27"/><rect x="11" y="6" width="2" height="1" fill="#dc5c27"/><rect x="8" y="7" width="2" height="1" fill="#dc5c27"/><rect x="11" y="7" width="2" height="1" fill="#dc5c27"/><rect x="8" y="8" width="2" height="1" fill="#dc5c27"/><rect x="11" y="8" width="2" height="1" fill="#dc5c27"/><rect x="8" y="9" width="4" height="1" fill="#dc5c27"/></g></svg>
<svg class="a" style="left:222px;top:492px" width="17" height="17" viewBox="0 0 17 17"><path d="M0 0 H13 L16 3 V16 H12 L10.5 14 H8 L6.5 15 H4.5 L3 13 H0 Z" fill="#fff"/><path d="M0.5 13 V0.5 H12.5 M12.5 0.5 L15.5 3.5 V16" fill="none" stroke="#cdcdcd" stroke-width="1"/><path d="M15.5 3.5 V15.8" fill="none" stroke="#a9a9a9" stroke-width="1"/><path d="M0 12.5 H3.2 L4.7 14.5 H6.6 L8.1 13.5 H10.6 L12.1 15.5 H16" fill="none" stroke="#a9a9a9" stroke-width="1"/><path d="M12.5 0.5 L15.5 3.5" fill="none" stroke="#a9a9a9" stroke-width="1"/><g shape-rendering="crispEdges"><rect x="3" y="5" width="3" height="1" fill="#dc5c27"/><rect x="5" y="6" width="2" height="1" fill="#dc5c27"/><rect x="2" y="7" width="5" height="1" fill="#dc5c27"/><rect x="2" y="8" width="2" height="1" fill="#dc5c27"/><rect x="5" y="8" width="2" height="1" fill="#dc5c27"/><rect x="3" y="9" width="4" height="1" fill="#dc5c27"/><rect x="2" y="9" width="1" height="1" fill="#dc5c27"/><rect x="8" y="3" width="2" height="1" fill="#dc5c27"/><rect x="8" y="4" width="2" height="1" fill="#dc5c27"/><rect x="8" y="5" width="4" height="1" fill="#dc5c27"/><rect x="8" y="6" width="2" height="1" fill="#dc5c27"/><rect x="11" y="6" width="2" height="1" fill="#dc5c27"/><rect x="8" y="7" width="2" height="1" fill="#dc5c27"/><rect x="11" y="7" width="2" height="1" fill="#dc5c27"/><rect x="8" y="8" width="2" height="1" fill="#dc5c27"/><rect x="11" y="8" width="2" height="1" fill="#dc5c27"/><rect x="8" y="9" width="4" height="1" fill="#dc5c27"/></g></svg>
<svg class="a" style="left:222px;top:511px" width="17" height="17" viewBox="0 0 17 17"><path d="M0 0 H13 L16 3 V16 H12 L10.5 14 H8 L6.5 15 H4.5 L3 13 H0 Z" fill="#fff"/><path d="M0.5 13 V0.5 H12.5 M12.5 0.5 L15.5 3.5 V16" fill="none" stroke="#cdcdcd" stroke-width="1"/><path d="M15.5 3.5 V15.8" fill="none" stroke="#a9a9a9" stroke-width="1"/><path d="M0 12.5 H3.2 L4.7 14.5 H6.6 L8.1 13.5 H10.6 L12.1 15.5 H16" fill="none" stroke="#a9a9a9" stroke-width="1"/><path d="M12.5 0.5 L15.5 3.5" fill="none" stroke="#a9a9a9" stroke-width="1"/><g shape-rendering="crispEdges"><rect x="3" y="5" width="3" height="1" fill="#dc5c27"/><rect x="5" y="6" width="2" height="1" fill="#dc5c27"/><rect x="2" y="7" width="5" height="1" fill="#dc5c27"/><rect x="2" y="8" width="2" height="1" fill="#dc5c27"/><rect x="5" y="8" width="2" height="1" fill="#dc5c27"/><rect x="3" y="9" width="4" height="1" fill="#dc5c27"/><rect x="2" y="9" width="1" height="1" fill="#dc5c27"/><rect x="8" y="3" width="2" height="1" fill="#dc5c27"/><rect x="8" y="4" width="2" height="1" fill="#dc5c27"/><rect x="8" y="5" width="4" height="1" fill="#dc5c27"/><rect x="8" y="6" width="2" height="1" fill="#dc5c27"/><rect x="11" y="6" width="2" height="1" fill="#dc5c27"/><rect x="8" y="7" width="2" height="1" fill="#dc5c27"/><rect x="11" y="7" width="2" height="1" fill="#dc5c27"/><rect x="8" y="8" width="2" height="1" fill="#dc5c27"/><rect x="11" y="8" width="2" height="1" fill="#dc5c27"/><rect x="8" y="9" width="4" height="1" fill="#dc5c27"/></g></svg>
<svg class="a" style="left:222px;top:530px" width="17" height="17" viewBox="0 0 17 17"><path d="M0 0 H13 L16 3 V16 H12 L10.5 14 H8 L6.5 15 H4.5 L3 13 H0 Z" fill="#fff"/><path d="M0.5 13 V0.5 H12.5 M12.5 0.5 L15.5 3.5 V16" fill="none" stroke="#cdcdcd" stroke-width="1"/><path d="M15.5 3.5 V15.8" fill="none" stroke="#a9a9a9" stroke-width="1"/><path d="M0 12.5 H3.2 L4.7 14.5 H6.6 L8.1 13.5 H10.6 L12.1 15.5 H16" fill="none" stroke="#a9a9a9" stroke-width="1"/><path d="M12.5 0.5 L15.5 3.5" fill="none" stroke="#a9a9a9" stroke-width="1"/><g shape-rendering="crispEdges"><rect x="3" y="3" width="3" height="1" fill="#1f5ce0"/><rect x="8" y="3" width="2" height="1" fill="#1f5ce0"/><rect x="11" y="3" width="2" height="1" fill="#1f5ce0"/><rect x="2" y="4" width="2" height="1" fill="#1f5ce0"/><rect x="5" y="4" width="2" height="1" fill="#1f5ce0"/><rect x="8" y="4" width="2" height="1" fill="#1f5ce0"/><rect x="11" y="4" width="2" height="1" fill="#1f5ce0"/><rect x="2" y="5" width="2" height="1" fill="#1f5ce0"/><rect x="5" y="5" width="2" height="1" fill="#1f5ce0"/><rect x="8" y="5" width="2" height="1" fill="#1f5ce0"/><rect x="11" y="5" width="2" height="1" fill="#1f5ce0"/><rect x="3" y="6" width="3" height="1" fill="#1f5ce0"/><rect x="8" y="6" width="2" height="1" fill="#1f5ce0"/><rect x="11" y="6" width="2" height="1" fill="#1f5ce0"/><rect x="3" y="8" width="2" height="1" fill="#1f5ce0"/><rect x="6" y="8" width="2" height="1" fill="#1f5ce0"/><rect x="10" y="8" width="3" height="1" fill="#1f5ce0"/><rect x="3" y="9" width="2" height="1" fill="#1f5ce0"/><rect x="6" y="9" width="2" height="1" fill="#1f5ce0"/><rect x="9" y="9" width="2" height="1" fill="#1f5ce0"/><rect x="12" y="9" width="2" height="1" fill="#1f5ce0"/><rect x="3" y="10" width="2" height="1" fill="#1f5ce0"/><rect x="6" y="10" width="2" height="1" fill="#1f5ce0"/><rect x="9" y="10" width="2" height="1" fill="#1f5ce0"/><rect x="12" y="10" width="2" height="1" fill="#1f5ce0"/><rect x="3" y="11" width="2" height="1" fill="#1f5ce0"/><rect x="6" y="11" width="2" height="1" fill="#1f5ce0"/><rect x="10" y="11" width="3" height="1" fill="#1f5ce0"/></g></svg>
<svg class="a" style="left:222px;top:549px" width="17" height="17" viewBox="0 0 17 17"><path d="M0 0 H13 L16 3 V16 H12 L10.5 14 H8 L6.5 15 H4.5 L3 13 H0 Z" fill="#fff"/><path d="M0.5 13 V0.5 H12.5 M12.5 0.5 L15.5 3.5 V16" fill="none" stroke="#cdcdcd" stroke-width="1"/><path d="M15.5 3.5 V15.8" fill="none" stroke="#a9a9a9" stroke-width="1"/><path d="M0 12.5 H3.2 L4.7 14.5 H6.6 L8.1 13.5 H10.6 L12.1 15.5 H16" fill="none" stroke="#a9a9a9" stroke-width="1"/><path d="M12.5 0.5 L15.5 3.5" fill="none" stroke="#a9a9a9" stroke-width="1"/><g shape-rendering="crispEdges"><rect x="3" y="3" width="3" height="1" fill="#1f5ce0"/><rect x="8" y="3" width="2" height="1" fill="#1f5ce0"/><rect x="11" y="3" width="2" height="1" fill="#1f5ce0"/><rect x="2" y="4" width="2" height="1" fill="#1f5ce0"/><rect x="5" y="4" width="2" height="1" fill="#1f5ce0"/><rect x="8" y="4" width="2" height="1" fill="#1f5ce0"/><rect x="11" y="4" width="2" height="1" fill="#1f5ce0"/><rect x="2" y="5" width="2" height="1" fill="#1f5ce0"/><rect x="5" y="5" width="2" height="1" fill="#1f5ce0"/><rect x="8" y="5" width="2" height="1" fill="#1f5ce0"/><rect x="11" y="5" width="2" height="1" fill="#1f5ce0"/><rect x="3" y="6" width="3" height="1" fill="#1f5ce0"/><rect x="8" y="6" width="2" height="1" fill="#1f5ce0"/><rect x="11" y="6" width="2" height="1" fill="#1f5ce0"/><rect x="3" y="8" width="2" height="1" fill="#1f5ce0"/><rect x="6" y="8" width="2" height="1" fill="#1f5ce0"/><rect x="10" y="8" width="3" height="1" fill="#1f5ce0"/><rect x="3" y="9" width="2" height="1" fill="#1f5ce0"/><rect x="6" y="9" width="2" height="1" fill="#1f5ce0"/><rect x="9" y="9" width="2" height="1" fill="#1f5ce0"/><rect x="12" y="9" width="2" height="1" fill="#1f5ce0"/><rect x="3" y="10" width="2" height="1" fill="#1f5ce0"/><rect x="6" y="10" width="2" height="1" fill="#1f5ce0"/><rect x="9" y="10" width="2" height="1" fill="#1f5ce0"/><rect x="12" y="10" width="2" height="1" fill="#1f5ce0"/><rect x="3" y="11" width="2" height="1" fill="#1f5ce0"/><rect x="6" y="11" width="2" height="1" fill="#1f5ce0"/><rect x="10" y="11" width="3" height="1" fill="#1f5ce0"/></g></svg>
<svg class="a" style="left:222px;top:568px" width="17" height="17" viewBox="0 0 17 17"><path d="M0 0 H13 L16 3 V16 H12 L10.5 14 H8 L6.5 15 H4.5 L3 13 H0 Z" fill="#fff"/><path d="M0.5 13 V0.5 H12.5 M12.5 0.5 L15.5 3.5 V16" fill="none" stroke="#cdcdcd" stroke-width="1"/><path d="M15.5 3.5 V15.8" fill="none" stroke="#a9a9a9" stroke-width="1"/><path d="M0 12.5 H3.2 L4.7 14.5 H6.6 L8.1 13.5 H10.6 L12.1 15.5 H16" fill="none" stroke="#a9a9a9" stroke-width="1"/><path d="M12.5 0.5 L15.5 3.5" fill="none" stroke="#a9a9a9" stroke-width="1"/><g shape-rendering="crispEdges"><rect x="3" y="3" width="3" height="1" fill="#1f5ce0"/><rect x="8" y="3" width="2" height="1" fill="#1f5ce0"/><rect x="11" y="3" width="2" height="1" fill="#1f5ce0"/><rect x="2" y="4" width="2" height="1" fill="#1f5ce0"/><rect x="5" y="4" width="2" height="1" fill="#1f5ce0"/><rect x="8" y="4" width="2" height="1" fill="#1f5ce0"/><rect x="11" y="4" width="2" height="1" fill="#1f5ce0"/><rect x="2" y="5" width="2" height="1" fill="#1f5ce0"/><rect x="5" y="5" width="2" height="1" fill="#1f5ce0"/><rect x="8" y="5" width="2" height="1" fill="#1f5ce0"/><rect x="11" y="5" width="2" height="1" fill="#1f5ce0"/><rect x="3" y="6" width="3" height="1" fill="#1f5ce0"/><rect x="8" y="6" width="2" height="1" fill="#1f5ce0"/><rect x="11" y="6" width="2" height="1" fill="#1f5ce0"/><rect x="3" y="8" width="2" height="1" fill="#1f5ce0"/><rect x="6" y="8" width="2" height="1" fill="#1f5ce0"/><rect x="10" y="8" width="3" height="1" fill="#1f5ce0"/><rect x="3" y="9" width="2" height="1" fill="#1f5ce0"/><rect x="6" y="9" width="2" height="1" fill="#1f5ce0"/><rect x="9" y="9" width="2" height="1" fill="#1f5ce0"/><rect x="12" y="9" width="2" height="1" fill="#1f5ce0"/><rect x="3" y="10" width="2" height="1" fill="#1f5ce0"/><rect x="6" y="10" width="2" height="1" fill="#1f5ce0"/><rect x="9" y="10" width="2" height="1" fill="#1f5ce0"/><rect x="12" y="10" width="2" height="1" fill="#1f5ce0"/><rect x="3" y="11" width="2" height="1" fill="#1f5ce0"/><rect x="6" y="11" width="2" height="1" fill="#1f5ce0"/><rect x="10" y="11" width="3" height="1" fill="#1f5ce0"/></g></svg>
<svg class="a" style="left:222px;top:587px" width="17" height="17" viewBox="0 0 17 17"><path d="M0 0 H13 L16 3 V16 H12 L10.5 14 H8 L6.5 15 H4.5 L3 13 H0 Z" fill="#fff"/><path d="M0.5 13 V0.5 H12.5 M12.5 0.5 L15.5 3.5 V16" fill="none" stroke="#cdcdcd" stroke-width="1"/><path d="M15.5 3.5 V15.8" fill="none" stroke="#a9a9a9" stroke-width="1"/><path d="M0 12.5 H3.2 L4.7 14.5 H6.6 L8.1 13.5 H10.6 L12.1 15.5 H16" fill="none" stroke="#a9a9a9" stroke-width="1"/><path d="M12.5 0.5 L15.5 3.5" fill="none" stroke="#a9a9a9" stroke-width="1"/><g shape-rendering="crispEdges"><rect x="3" y="3" width="3" height="1" fill="#1f5ce0"/><rect x="8" y="3" width="2" height="1" fill="#1f5ce0"/><rect x="11" y="3" width="2" height="1" fill="#1f5ce0"/><rect x="2" y="4" width="2" height="1" fill="#1f5ce0"/><rect x="5" y="4" width="2" height="1" fill="#1f5ce0"/><rect x="8" y="4" width="2" height="1" fill="#1f5ce0"/><rect x="11" y="4" width="2" height="1" fill="#1f5ce0"/><rect x="2" y="5" width="2" height="1" fill="#1f5ce0"/><rect x="5" y="5" width="2" height="1" fill="#1f5ce0"/><rect x="8" y="5" width="2" height="1" fill="#1f5ce0"/><rect x="11" y="5" width="2" height="1" fill="#1f5ce0"/><rect x="3" y="6" width="3" height="1" fill="#1f5ce0"/><rect x="8" y="6" width="2" height="1" fill="#1f5ce0"/><rect x="11" y="6" width="2" height="1" fill="#1f5ce0"/><rect x="3" y="8" width="2" height="1" fill="#1f5ce0"/><rect x="6" y="8" width="2" height="1" fill="#1f5ce0"/><rect x="10" y="8" width="3" height="1" fill="#1f5ce0"/><rect x="3" y="9" width="2" height="1" fill="#1f5ce0"/><rect x="6" y="9" width="2" height="1" fill="#1f5ce0"/><rect x="9" y="9" width="2" height="1" fill="#1f5ce0"/><rect x="12" y="9" width="2" height="1" fill="#1f5ce0"/><rect x="3" y="10" width="2" height="1" fill="#1f5ce0"/><rect x="6" y="10" width="2" height="1" fill="#1f5ce0"/><rect x="9" y="10" width="2" height="1" fill="#1f5ce0"/><rect x="12" y="10" width="2" height="1" fill="#1f5ce0"/><rect x="3" y="11" width="2" height="1" fill="#1f5ce0"/><rect x="6" y="11" width="2" height="1" fill="#1f5ce0"/><rect x="10" y="11" width="3" height="1" fill="#1f5ce0"/></g></svg>
<svg class="a" style="left:222px;top:606px" width="17" height="17" viewBox="0 0 17 17"><path d="M0 0 H13 L16 3 V16 H12 L10.5 14 H8 L6.5 15 H4.5 L3 13 H0 Z" fill="#fff"/><path d="M0.5 13 V0.5 H12.5 M12.5 0.5 L15.5 3.5 V16" fill="none" stroke="#cdcdcd" stroke-width="1"/><path d="M15.5 3.5 V15.8" fill="none" stroke="#a9a9a9" stroke-width="1"/><path d="M0 12.5 H3.2 L4.7 14.5 H6.6 L8.1 13.5 H10.6 L12.1 15.5 H16" fill="none" stroke="#a9a9a9" stroke-width="1"/><path d="M12.5 0.5 L15.5 3.5" fill="none" stroke="#a9a9a9" stroke-width="1"/><g shape-rendering="crispEdges"><rect x="3" y="3" width="3" height="1" fill="#1f5ce0"/><rect x="8" y="3" width="2" height="1" fill="#1f5ce0"/><rect x="11" y="3" width="2" height="1" fill="#1f5ce0"/><rect x="2" y="4" width="2" height="1" fill="#1f5ce0"/><rect x="5" y="4" width="2" height="1" fill="#1f5ce0"/><rect x="8" y="4" width="2" height="1" fill="#1f5ce0"/><rect x="11" y="4" width="2" height="1" fill="#1f5ce0"/><rect x="2" y="5" width="2" height="1" fill="#1f5ce0"/><rect x="5" y="5" width="2" height="1" fill="#1f5ce0"/><rect x="8" y="5" width="2" height="1" fill="#1f5ce0"/><rect x="11" y="5" width="2" height="1" fill="#1f5ce0"/><rect x="3" y="6" width="3" height="1" fill="#1f5ce0"/><rect x="8" y="6" width="2" height="1" fill="#1f5ce0"/><rect x="11" y="6" width="2" height="1" fill="#1f5ce0"/><rect x="3" y="8" width="2" height="1" fill="#1f5ce0"/><rect x="6" y="8" width="2" height="1" fill="#1f5ce0"/><rect x="10" y="8" width="3" height="1" fill="#1f5ce0"/><rect x="3" y="9" width="2" height="1" fill="#1f5ce0"/><rect x="6" y="9" width="2" height="1" fill="#1f5ce0"/><rect x="9" y="9" width="2" height="1" fill="#1f5ce0"/><rect x="12" y="9" width="2" height="1" fill="#1f5ce0"/><rect x="3" y="10" width="2" height="1" fill="#1f5ce0"/><rect x="6" y="10" width="2" height="1" fill="#1f5ce0"/><rect x="9" y="10" width="2" height="1" fill="#1f5ce0"/><rect x="12" y="10" width="2" height="1" fill="#1f5ce0"/><rect x="3" y="11" width="2" height="1" fill="#1f5ce0"/><rect x="6" y="11" width="2" height="1" fill="#1f5ce0"/><rect x="10" y="11" width="3" height="1" fill="#1f5ce0"/></g></svg>
<svg class="a" style="left:222px;top:625px" width="17" height="17" viewBox="0 0 17 17"><path d="M0 0 H13 L16 3 V16 H12 L10.5 14 H8 L6.5 15 H4.5 L3 13 H0 Z" fill="#fff"/><path d="M0.5 13 V0.5 H12.5 M12.5 0.5 L15.5 3.5 V16" fill="none" stroke="#cdcdcd" stroke-width="1"/><path d="M15.5 3.5 V15.8" fill="none" stroke="#a9a9a9" stroke-width="1"/><path d="M0 12.5 H3.2 L4.7 14.5 H6.6 L8.1 13.5 H10.6 L12.1 15.5 H16" fill="none" stroke="#a9a9a9" stroke-width="1"/><path d="M12.5 0.5 L15.5 3.5" fill="none" stroke="#a9a9a9" stroke-width="1"/><g shape-rendering="crispEdges"><rect x="3" y="3" width="3" height="1" fill="#1f5ce0"/><rect x="8" y="3" width="2" height="1" fill="#1f5ce0"/><rect x="11" y="3" width="2" height="1" fill="#1f5ce0"/><rect x="2" y="4" width="2" height="1" fill="#1f5ce0"/><rect x="5" y="4" width="2" height="1" fill="#1f5ce0"/><rect x="8" y="4" width="2" height="1" fill="#1f5ce0"/><rect x="11" y="4" width="2" height="1" fill="#1f5ce0"/><rect x="2" y="5" width="2" height="1" fill="#1f5ce0"/><rect x="5" y="5" width="2" height="1" fill="#1f5ce0"/><rect x="8" y="5" width="2" height="1" fill="#1f5ce0"/><rect x="11" y="5" width="2" height="1" fill="#1f5ce0"/><rect x="3" y="6" width="3" height="1" fill="#1f5ce0"/><rect x="8" y="6" width="2" height="1" fill="#1f5ce0"/><rect x="11" y="6" width="2" height="1" fill="#1f5ce0"/><rect x="3" y="8" width="2" height="1" fill="#1f5ce0"/><rect x="6" y="8" width="2" height="1" fill="#1f5ce0"/><rect x="10" y="8" width="3" height="1" fill="#1f5ce0"/><rect x="3" y="9" width="2" height="1" fill="#1f5ce0"/><rect x="6" y="9" width="2" height="1" fill="#1f5ce0"/><rect x="9" y="9" width="2" height="1" fill="#1f5ce0"/><rect x="12" y="9" width="2" height="1" fill="#1f5ce0"/><rect x="3" y="10" width="2" height="1" fill="#1f5ce0"/><rect x="6" y="10" width="2" height="1" fill="#1f5ce0"/><rect x="9" y="10" width="2" height="1" fill="#1f5ce0"/><rect x="12" y="10" width="2" height="1" fill="#1f5ce0"/><rect x="3" y="11" width="2" height="1" fill="#1f5ce0"/><rect x="6" y="11" width="2" height="1" fill="#1f5ce0"/><rect x="10" y="11" width="3" height="1" fill="#1f5ce0"/></g></svg>
<svg class="a" style="left:222px;top:644px" width="17" height="17" viewBox="0 0 17 17"><path d="M0 0 H13 L16 3 V16 H12 L10.5 14 H8 L6.5 15 H4.5 L3 13 H0 Z" fill="#fff"/><path d="M0.5 13 V0.5 H12.5 M12.5 0.5 L15.5 3.5 V16" fill="none" stroke="#cdcdcd" stroke-width="1"/><path d="M15.5 3.5 V15.8" fill="none" stroke="#a9a9a9" stroke-width="1"/><path d="M0 12.5 H3.2 L4.7 14.5 H6.6 L8.1 13.5 H10.6 L12.1 15.5 H16" fill="none" stroke="#a9a9a9" stroke-width="1"/><path d="M12.5 0.5 L15.5 3.5" fill="none" stroke="#a9a9a9" stroke-width="1"/><g shape-rendering="crispEdges"><rect x="3" y="3" width="3" height="1" fill="#1f5ce0"/><rect x="8" y="3" width="2" height="1" fill="#1f5ce0"/><rect x="11" y="3" width="2" height="1" fill="#1f5ce0"/><rect x="2" y="4" width="2" height="1" fill="#1f5ce0"/><rect x="5" y="4" width="2" height="1" fill="#1f5ce0"/><rect x="8" y="4" width="2" height="1" fill="#1f5ce0"/><rect x="11" y="4" width="2" height="1" fill="#1f5ce0"/><rect x="2" y="5" width="2" height="1" fill="#1f5ce0"/><rect x="5" y="5" width="2" height="1" fill="#1f5ce0"/><rect x="8" y="5" width="2" height="1" fill="#1f5ce0"/><rect x="11" y="5" width="2" height="1" fill="#1f5ce0"/><rect x="3" y="6" width="3" height="1" fill="#1f5ce0"/><rect x="8" y="6" width="2" height="1" fill="#1f5ce0"/><rect x="11" y="6" width="2" height="1" fill="#1f5ce0"/><rect x="3" y="8" width="2" height="1" fill="#1f5ce0"/><rect x="6" y="8" width="2" height="1" fill="#1f5ce0"/><rect x="10" y="8" width="3" height="1" fill="#1f5ce0"/><rect x="3" y="9" width="2" height="1" fill="#1f5ce0"/><rect x="6" y="9" width="2" height="1" fill="#1f5ce0"/><rect x="9" y="9" width="2" height="1" fill="#1f5ce0"/><rect x="12" y="9" width="2" height="1" fill="#1f5ce0"/><rect x="3" y="10" width="2" height="1" fill="#1f5ce0"/><rect x="6" y="10" width="2" height="1" fill="#1f5ce0"/><rect x="9" y="10" width="2" height="1" fill="#1f5ce0"/><rect x="12" y="10" width="2" height="1" fill="#1f5ce0"/><rect x="3" y="11" width="2" height="1" fill="#1f5ce0"/><rect x="6" y="11" width="2" height="1" fill="#1f5ce0"/><rect x="10" y="11" width="3" height="1" fill="#1f5ce0"/></g></svg>
<svg class="a" style="left:222px;top:663px" width="17" height="17" viewBox="0 0 17 17"><path d="M0 0 H13 L16 3 V16 H12 L10.5 14 H8 L6.5 15 H4.5 L3 13 H0 Z" fill="#fff"/><path d="M0.5 13 V0.5 H12.5 M12.5 0.5 L15.5 3.5 V16" fill="none" stroke="#cdcdcd" stroke-width="1"/><path d="M15.5 3.5 V15.8" fill="none" stroke="#a9a9a9" stroke-width="1"/><path d="M0 12.5 H3.2 L4.7 14.5 H6.6 L8.1 13.5 H10.6 L12.1 15.5 H16" fill="none" stroke="#a9a9a9" stroke-width="1"/><path d="M12.5 0.5 L15.5 3.5" fill="none" stroke="#a9a9a9" stroke-width="1"/><g shape-rendering="crispEdges"><rect x="3" y="3" width="3" height="1" fill="#1f5ce0"/><rect x="8" y="3" width="2" height="1" fill="#1f5ce0"/><rect x="11" y="3" width="2" height="1" fill="#1f5ce0"/><rect x="2" y="4" width="2" height="1" fill="#1f5ce0"/><rect x="5" y="4" width="2" height="1" fill="#1f5ce0"/><rect x="8" y="4" width="2" height="1" fill="#1f5ce0"/><rect x="11" y="4" width="2" height="1" fill="#1f5ce0"/><rect x="2" y="5" width="2" height="1" fill="#1f5ce0"/><rect x="5" y="5" width="2" height="1" fill="#1f5ce0"/><rect x="8" y="5" width="2" height="1" fill="#1f5ce0"/><rect x="11" y="5" width="2" height="1" fill="#1f5ce0"/><rect x="3" y="6" width="3" height="1" fill="#1f5ce0"/><rect x="8" y="6" width="2" height="1" fill="#1f5ce0"/><rect x="11" y="6" width="2" height="1" fill="#1f5ce0"/><rect x="3" y="8" width="2" height="1" fill="#1f5ce0"/><rect x="6" y="8" width="2" height="1" fill="#1f5ce0"/><rect x="10" y="8" width="3" height="1" fill="#1f5ce0"/><rect x="3" y="9" width="2" height="1" fill="#1f5ce0"/><rect x="6" y="9" width="2" height="1" fill="#1f5ce0"/><rect x="9" y="9" width="2" height="1" fill="#1f5ce0"/><rect x="12" y="9" width="2" height="1" fill="#1f5ce0"/><rect x="3" y="10" width="2" height="1" fill="#1f5ce0"/><rect x="6" y="10" width="2" height="1" fill="#1f5ce0"/><rect x="9" y="10" width="2" height="1" fill="#1f5ce0"/><rect x="12" y="10" width="2" height="1" fill="#1f5ce0"/><rect x="3" y="11" width="2" height="1" fill="#1f5ce0"/><rect x="6" y="11" width="2" height="1" fill="#1f5ce0"/><rect x="10" y="11" width="3" height="1" fill="#1f5ce0"/></g></svg>
<svg class="a" style="left:222px;top:682px" width="17" height="17" viewBox="0 0 17 17"><path d="M0 0 H13 L16 3 V16 H12 L10.5 14 H8 L6.5 15 H4.5 L3 13 H0 Z" fill="#fff"/><path d="M0.5 13 V0.5 H12.5 M12.5 0.5 L15.5 3.5 V16" fill="none" stroke="#cdcdcd" stroke-width="1"/><path d="M15.5 3.5 V15.8" fill="none" stroke="#a9a9a9" stroke-width="1"/><path d="M0 12.5 H3.2 L4.7 14.5 H6.6 L8.1 13.5 H10.6 L12.1 15.5 H16" fill="none" stroke="#a9a9a9" stroke-width="1"/><path d="M12.5 0.5 L15.5 3.5" fill="none" stroke="#a9a9a9" stroke-width="1"/><g shape-rendering="crispEdges"><rect x="3" y="5" width="3" height="1" fill="#dc5c27"/><rect x="5" y="6" width="2" height="1" fill="#dc5c27"/><rect x="2" y="7" width="5" height="1" fill="#dc5c27"/><rect x="2" y="8" width="2" height="1" fill="#dc5c27"/><rect x="5" y="8" width="2" height="1" fill="#dc5c27"/><rect x="3" y="9" width="4" height="1" fill="#dc5c27"/><rect x="2" y="9" width="1" height="1" fill="#dc5c27"/><rect x="8" y="3" width="2" height="1" fill="#dc5c27"/><rect x="8" y="4" width="2" height="1" fill="#dc5c27"/><rect x="8" y="5" width="4" height="1" fill="#dc5c27"/><rect x="8" y="6" width="2" height="1" fill="#dc5c27"/><rect x="11" y="6" width="2" height="1" fill="#dc5c27"/><rect x="8" y="7" width="2" height="1" fill="#dc5c27"/><rect x="11" y="7" width="2" height="1" fill="#dc5c27"/><rect x="8" y="8" width="2" height="1" fill="#dc5c27"/><rect x="11" y="8" width="2" height="1" fill="#dc5c27"/><rect x="8" y="9" width="4" height="1" fill="#dc5c27"/></g></svg>
<svg class="a" style="left:222px;top:701px" width="17" height="17" viewBox="0 0 17 17"><path d="M0 0 H13 L16 3 V16 H12 L10.5 14 H8 L6.5 15 H4.5 L3 13 H0 Z" fill="#a6d5f5"/><path d="M0.5 13 V0.5 H12.5 M12.5 0.5 L15.5 3.5 V16" fill="none" stroke="#5b9fd6" stroke-width="1"/><path d="M15.5 3.5 V15.8" fill="none" stroke="#3f86c7" stroke-width="1"/><path d="M0 12.5 H3.2 L4.7 14.5 H6.6 L8.1 13.5 H10.6 L12.1 15.5 H16" fill="none" stroke="#3f86c7" stroke-width="1"/><path d="M12.5 0.5 L15.5 3.5" fill="none" stroke="#3f86c7" stroke-width="1"/><g shape-rendering="crispEdges"><rect x="3" y="5" width="3" height="1" fill="#a0696f"/><rect x="5" y="6" width="2" height="1" fill="#a0696f"/><rect x="2" y="7" width="5" height="1" fill="#a0696f"/><rect x="2" y="8" width="2" height="1" fill="#a0696f"/><rect x="5" y="8" width="2" height="1" fill="#a0696f"/><rect x="3" y="9" width="4" height="1" fill="#a0696f"/><rect x="2" y="9" width="1" height="1" fill="#a0696f"/><rect x="8" y="3" width="2" height="1" fill="#a0696f"/><rect x="8" y="4" width="2" height="1" fill="#a0696f"/><rect x="8" y="5" width="4" height="1" fill="#a0696f"/><rect x="8" y="6" width="2" height="1" fill="#a0696f"/><rect x="11" y="6" width="2" height="1" fill="#a0696f"/><rect x="8" y="7" width="2" height="1" fill="#a0696f"/><rect x="11" y="7" width="2" height="1" fill="#a0696f"/><rect x="8" y="8" width="2" height="1" fill="#a0696f"/><rect x="11" y="8" width="2" height="1" fill="#a0696f"/><rect x="8" y="9" width="4" height="1" fill="#a0696f"/></g></svg>
<div class="sep" style="left:337px"></div><div class="sep" style="left:457px"></div><div class="sep" style="left:745px"></div>
<div class="a" style="left:75px;top:728px;width:86px;height:2px;background:#88888c;border-radius:1px"></div>
<div class="t" style="left:25.40px;top:4px;font-size:12px;transform:scaleX(0.9593);color:#929292">Редактор реестра</div>
<div class="t" style="left:3.70px;top:29px;font-size:12px;transform:scaleX(0.9458);color:#8a8a8a">Файл</div>
<div class="t" style="left:46.00px;top:29px;font-size:12px;transform:scaleX(0.9691);color:#8a8a8a">Правка</div>
<div class="t" style="left:100.40px;top:29px;font-size:12px;transform:scaleX(0.8937);color:#8a8a8a">Вид</div>
<div class="t" style="left:133.90px;top:29px;font-size:12px;transform:scaleX(1.0026);color:#8a8a8a">Избранное</div>
<div class="t" style="left:209.40px;top:29px;font-size:12px;transform:scaleX(0.9388);color:#8a8a8a">Справка</div>
<div class="t" style="left:1.96px;top:50px;font-size:12.5px;transform:scaleX(1.0421);color:#000">Компьютер\</div>
<div class="t" style="left:72.10px;top:50px;font-size:12.5px;transform:scaleX(0.8970);color:#000">HKEY_LOCAL_MACHINE\</div>
<div class="t" style="left:206.70px;top:50px;font-size:12.5px;transform:scaleX(0.8784);color:#000">SYSTEM\</div>
<div class="t" style="left:254.90px;top:50px;font-size:12.5px;transform:scaleX(0.9701);color:#000">CurrentControlSet\</div>
<div class="t" style="left:356.00px;top:50px;font-size:12.5px;transform:scaleX(0.9253);color:#000">Control\</div>
<div class="t" style="left:396.50px;top:50px;font-size:12.5px;transform:scaleX(0.9589);color:#000">Class\</div>
<div class="t" style="left:429.80px;top:50px;font-size:12.5px;transform:scaleX(0.9217);color:#000">{4d36e972-e325-11ce-bfc1-08002be10318}\0000</div>
<div class="t" style="left:16.20px;top:359px;font-size:12.5px;transform:scaleX(0.8544);color:#000">0000</div>
<div class="t" style="left:32.06px;top:377px;font-size:12.5px;transform:scaleX(0.9385);color:#000">Linkage</div>
<div class="t" style="left:31.97px;top:395px;font-size:12.5px;transform:scaleX(1.0307);color:#000">Ndi</div>
<div class="t" style="left:32.04px;top:413px;font-size:12.5px;transform:scaleX(0.9644);color:#000">NetworkInterface</div>
<div class="t" style="left:16.20px;top:431px;font-size:12.5px;transform:scaleX(0.8329);color:#000">0001</div>
<div class="t" style="left:16.20px;top:449px;font-size:12.5px;transform:scaleX(0.8329);color:#000">0002</div>
<div class="t" style="left:16.20px;top:467px;font-size:12.5px;transform:scaleX(0.8329);color:#000">0003</div>
<div class="t" style="left:16.20px;top:485px;font-size:12.5px;transform:scaleX(0.8329);color:#000">0004</div>
<div class="t" style="left:16.20px;top:503px;font-size:12.5px;transform:scaleX(0.8329);color:#000">0005</div>
<div class="t" style="left:16.20px;top:521px;font-size:12.5px;transform:scaleX(0.8329);color:#000">0006</div>
<div class="t" style="left:16.20px;top:539px;font-size:12.5px;transform:scaleX(0.8329);color:#000">0007</div>
<div class="t" style="left:16.20px;top:557px;font-size:12.5px;transform:scaleX(0.8329);color:#000">0008</div>
<div class="t" style="left:16.20px;top:575px;font-size:12.5px;transform:scaleX(0.8329);color:#000">0009</div>
<div class="t" style="left:16.20px;top:593px;font-size:12.5px;transform:scaleX(0.8329);color:#000">0010</div>
<div class="t" style="left:16.20px;top:611px;font-size:12.5px;transform:scaleX(0.8616);color:#000">0011</div>
<div class="t" style="left:16.20px;top:629px;font-size:12.5px;transform:scaleX(0.8329);color:#000">0012</div>
<div class="t" style="left:16.20px;top:647px;font-size:12.5px;transform:scaleX(0.8329);color:#000">0013</div>
<div class="t" style="left:16.20px;top:665px;font-size:12.5px;transform:scaleX(0.8329);color:#000">0014</div>
<div class="t" style="left:16.20px;top:683px;font-size:12.5px;transform:scaleX(0.8329);color:#000">0015</div>
<div class="t" style="left:16.20px;top:701px;font-size:12.5px;transform:scaleX(0.8329);color:#000">0016</div>
<div class="t" style="left:464.40px;top:96px;font-size:12px;transform:scaleX(0.9000);color:#000">0</div>
<div class="t" style="left:464.40px;top:115px;font-size:12px;transform:scaleX(0.8898);color:#000">0x00000004 (4)</div>
<div class="t" style="left:464.40px;top:134px;font-size:12px;transform:scaleX(0.8932);color:#000">PCI\VEN_10EC&amp;DEV_8162&amp;SUBSYS_208F1043&amp;RE...</div>
<div class="t" style="left:464.40px;top:153px;font-size:12px;transform:scaleX(0.9000);color:#000">0</div>
<div class="t" style="left:464.40px;top:172px;font-size:12px;transform:scaleX(0.8898);color:#000">0x00000000 (0)</div>
<div class="t" style="left:464.40px;top:191px;font-size:12px;transform:scaleX(0.9030);color:#000">{00DE4CF7-7531-4EB6-BD45-5CDCA2E2EE46}</div>
<div class="t" style="left:464.40px;top:210px;font-size:12px;transform:scaleX(0.8947);color:#000">0x00008000 (32768)</div>
<div class="t" style="left:464.40px;top:229px;font-size:12px;transform:scaleX(0.9150);color:#000">0x1db997cb2f55107 (133869374794977543)</div>
<div class="t" style="left:239.35px;top:248px;font-size:12.5px;transform:scaleX(0.9522);color:#000">PowerDownPll</div>
<div class="t" style="left:343.62px;top:248px;font-size:12.5px;transform:scaleX(0.7838);color:#000">REG_SZ</div>
<div class="t" style="left:464.40px;top:248px;font-size:12px;transform:scaleX(0.9000);color:#000">1</div>
<div class="t" style="left:239.36px;top:267px;font-size:12.5px;transform:scaleX(0.9444);color:#000">PowerSavingMo...</div>
<div class="t" style="left:343.62px;top:267px;font-size:12.5px;transform:scaleX(0.7838);color:#000">REG_SZ</div>
<div class="t" style="left:464.40px;top:267px;font-size:12px;transform:scaleX(0.9000);color:#000">1</div>
<div class="t" style="left:239.46px;top:286px;font-size:12.5px;transform:scaleX(0.8414);color:#000">PPSW</div>
<div class="t" style="left:343.62px;top:286px;font-size:12.5px;transform:scaleX(0.7838);color:#000">REG_SZ</div>
<div class="t" style="left:464.40px;top:286px;font-size:12px;transform:scaleX(0.9000);color:#000">1</div>
<div class="t" style="left:239.34px;top:305px;font-size:12.5px;transform:scaleX(0.9603);color:#000">ProviderName</div>
<div class="t" style="left:343.62px;top:305px;font-size:12.5px;transform:scaleX(0.7838);color:#000">REG_SZ</div>
<div class="t" style="left:464.40px;top:305px;font-size:12px;transform:scaleX(0.9019);color:#000">Realtek</div>
<div class="t" style="left:239.46px;top:324px;font-size:12.5px;transform:scaleX(0.8361);color:#000">RDBSize</div>
<div class="t" style="left:343.57px;top:324px;font-size:12.5px;transform:scaleX(0.8320);color:#000">REG_DWORD</div>
<div class="t" style="left:464.40px;top:324px;font-size:12px;transform:scaleX(0.9724);color:#000">0xffffffff (4294967295)</div>
<div class="t" style="left:239.38px;top:343px;font-size:12.5px;transform:scaleX(0.9220);color:#000">RegVlanid</div>
<div class="t" style="left:343.62px;top:343px;font-size:12.5px;transform:scaleX(0.7838);color:#000">REG_SZ</div>
<div class="t" style="left:464.40px;top:343px;font-size:12px;transform:scaleX(0.9000);color:#000">0</div>
<div class="t" style="left:239.43px;top:362px;font-size:12.5px;transform:scaleX(0.8680);color:#000">RIACP</div>
<div class="t" style="left:343.62px;top:362px;font-size:12.5px;transform:scaleX(0.7838);color:#000">REG_SZ</div>
<div class="t" style="left:464.40px;top:362px;font-size:12px;transform:scaleX(0.9000);color:#000">0</div>
<div class="t" style="left:239.41px;top:381px;font-size:12.5px;transform:scaleX(0.8885);color:#000">RMPT</div>
<div class="t" style="left:343.57px;top:381px;font-size:12.5px;transform:scaleX(0.8320);color:#000">REG_DWORD</div>
<div class="t" style="left:464.40px;top:381px;font-size:12px;transform:scaleX(0.8898);color:#000">0x00000000 (0)</div>
<div class="t" style="left:239.35px;top:400px;font-size:12.5px;transform:scaleX(0.9508);color:#000">RtHwCapability</div>
<div class="t" style="left:343.57px;top:400px;font-size:12.5px;transform:scaleX(0.8320);color:#000">REG_DWORD</div>
<div class="t" style="left:464.40px;top:400px;font-size:12px;transform:scaleX(0.8960);color:#000">0x0000000c (12)</div>
<div class="t" style="left:239.33px;top:419px;font-size:12.5px;transform:scaleX(0.9666);color:#000">RtIdleTimeout</div>
<div class="t" style="left:343.57px;top:419px;font-size:12.5px;transform:scaleX(0.8320);color:#000">REG_DWORD</div>
<div class="t" style="left:464.40px;top:419px;font-size:12px;transform:scaleX(0.8898);color:#000">0x00000000 (0)</div>
<div class="t" style="left:239.37px;top:438px;font-size:12.5px;transform:scaleX(0.9311);color:#000">RxOptimizeThre...</div>
<div class="t" style="left:343.57px;top:438px;font-size:12.5px;transform:scaleX(0.8320);color:#000">REG_DWORD</div>
<div class="t" style="left:464.40px;top:438px;font-size:12px;transform:scaleX(0.8898);color:#000">0x00000000 (0)</div>
<div class="t" style="left:240.30px;top:457px;font-size:12.5px;transform:scaleX(0.9097);color:#000">S0MgcPkt</div>
<div class="t" style="left:343.62px;top:457px;font-size:12.5px;transform:scaleX(0.7838);color:#000">REG_SZ</div>
<div class="t" style="left:464.40px;top:457px;font-size:12px;transform:scaleX(0.9000);color:#000">0</div>
<div class="t" style="left:240.30px;top:476px;font-size:12.5px;transform:scaleX(0.9025);color:#000">S5NicKeepOverr...</div>
<div class="t" style="left:343.62px;top:476px;font-size:12.5px;transform:scaleX(0.7838);color:#000">REG_SZ</div>
<div class="t" style="left:464.40px;top:476px;font-size:12px;transform:scaleX(0.9000);color:#000">0</div>
<div class="t" style="left:240.30px;top:495px;font-size:12.5px;transform:scaleX(0.9025);color:#000">S5NicKeepOverr...</div>
<div class="t" style="left:343.62px;top:495px;font-size:12.5px;transform:scaleX(0.7838);color:#000">REG_SZ</div>
<div class="t" style="left:464.40px;top:495px;font-size:12px;transform:scaleX(0.9000);color:#000">1</div>
<div class="t" style="left:240.30px;top:514px;font-size:12.5px;transform:scaleX(0.8915);color:#000">S5WakeOnLan</div>
<div class="t" style="left:343.62px;top:514px;font-size:12.5px;transform:scaleX(0.7838);color:#000">REG_SZ</div>
<div class="t" style="left:464.40px;top:514px;font-size:12px;transform:scaleX(0.9000);color:#000">0</div>
<div class="t" style="left:240.30px;top:533px;font-size:12.5px;transform:scaleX(0.8941);color:#000">SwIML</div>
<div class="t" style="left:343.57px;top:533px;font-size:12.5px;transform:scaleX(0.8320);color:#000">REG_DWORD</div>
<div class="t" style="left:464.40px;top:533px;font-size:12px;transform:scaleX(0.8898);color:#000">0x00000000 (0)</div>
<div class="t" style="left:240.30px;top:552px;font-size:12.5px;transform:scaleX(0.8899);color:#000">SwIML100</div>
<div class="t" style="left:343.57px;top:552px;font-size:12.5px;transform:scaleX(0.8320);color:#000">REG_DWORD</div>
<div class="t" style="left:464.40px;top:552px;font-size:12px;transform:scaleX(0.8898);color:#000">0x00000000 (0)</div>
<div class="t" style="left:240.30px;top:571px;font-size:12.5px;transform:scaleX(0.8818);color:#000">SwIML100V2</div>
<div class="t" style="left:343.57px;top:571px;font-size:12.5px;transform:scaleX(0.8320);color:#000">REG_DWORD</div>
<div class="t" style="left:464.40px;top:571px;font-size:12px;transform:scaleX(0.8898);color:#000">0x00000000 (0)</div>
<div class="t" style="left:240.30px;top:590px;font-size:12.5px;transform:scaleX(0.8800);color:#000">SwIMLV2</div>
<div class="t" style="left:343.57px;top:590px;font-size:12.5px;transform:scaleX(0.8320);color:#000">REG_DWORD</div>
<div class="t" style="left:464.40px;top:590px;font-size:12px;transform:scaleX(0.8898);color:#000">0x00000000 (0)</div>
<div class="t" style="left:240.30px;top:609px;font-size:12.5px;transform:scaleX(0.8819);color:#000">SwParaMask</div>
<div class="t" style="left:343.57px;top:609px;font-size:12.5px;transform:scaleX(0.8320);color:#000">REG_DWORD</div>
<div class="t" style="left:464.40px;top:609px;font-size:12px;transform:scaleX(0.8898);color:#000">0x00000000 (0)</div>
<div class="t" style="left:240.30px;top:628px;font-size:12.5px;transform:scaleX(0.8427);color:#000">TDBSize</div>
<div class="t" style="left:343.57px;top:628px;font-size:12.5px;transform:scaleX(0.8320);color:#000">REG_DWORD</div>
<div class="t" style="left:464.40px;top:628px;font-size:12px;transform:scaleX(0.9724);color:#000">0xffffffff (4294967295)</div>
<div class="t" style="left:240.30px;top:647px;font-size:12.5px;transform:scaleX(0.9206);color:#000">TxOptimizeThre...</div>
<div class="t" style="left:343.57px;top:647px;font-size:12.5px;transform:scaleX(0.8320);color:#000">REG_DWORD</div>
<div class="t" style="left:464.40px;top:647px;font-size:12px;transform:scaleX(0.8898);color:#000">0x00000000 (0)</div>
<div class="t" style="left:240.30px;top:666px;font-size:12.5px;transform:scaleX(0.8958);color:#000">UCEM</div>
<div class="t" style="left:343.57px;top:666px;font-size:12.5px;transform:scaleX(0.8320);color:#000">REG_DWORD</div>
<div class="t" style="left:464.40px;top:666px;font-size:12px;transform:scaleX(0.8898);color:#000">0x00000000 (0)</div>
<div class="t" style="left:240.30px;top:685px;font-size:12.5px;transform:scaleX(0.9547);color:#000">WolShutdownLi...</div>
<div class="t" style="left:343.62px;top:685px;font-size:12.5px;transform:scaleX(0.7838);color:#000">REG_SZ</div>
<div class="t" style="left:464.40px;top:685px;font-size:12px;transform:scaleX(0.9000);color:#000">0</div>
<div class="t" style="left:239.35px;top:704px;font-size:12.5px;transform:scaleX(0.9541);color:#000">NetworkAddress</div>
<div class="t" style="left:343.62px;top:704px;font-size:12.5px;transform:scaleX(0.7838);color:#000">REG_SZ</div>
<div class="t" style="left:224.40px;top:74px;font-size:12px;transform:scaleX(1.0000);color:#000">Имя</div>
<div class="t" style="left:344.40px;top:74px;font-size:12px;transform:scaleX(1.0000);color:#000">Тип</div>
<div class="t" style="left:464.00px;top:74px;font-size:12px;transform:scaleX(0.9862);color:#000">Значение</div>


<div class="a" style="left:52px;top:84px;width:379px;height:169px;border-radius:8px;background:#f4f4f4;border:1px solid #c4c4c4;box-shadow:0 5px 10px rgba(0,0,0,.09),0 12px 32px rgba(0,0,0,.10)"></div>
<div class="a" style="left:53px;top:115px;width:377px;height:137px;background:#f2f2f2;border-radius:0 0 7px 7px"></div>
<svg class="a" style="left:409px;top:93px" width="12" height="12" viewBox="0 0 12 12"><path d="M1 1 L11 11 M11 1 L1 11" stroke="#8f8f8f" stroke-width="1"/></svg>
<div class="a" style="left:62px;top:144px;width:358px;height:19px;background:#f1f1f1;border:1px solid #fbfbfb;border-bottom:1px solid #8a8a8a;border-radius:3px 3px 0 0"></div>
<div class="a" style="left:62px;top:191px;width:358px;height:19px;background:#fff;border:1px solid #f2f2f2;border-bottom:1px solid #8a8a8a;border-radius:3px 3px 0 0"></div>
<div class="a" style="left:266px;top:220px;width:73px;height:21px;background:#fbfbfb;border:1px solid #dadada;border-radius:4px"></div>
<div class="a" style="left:347px;top:220px;width:73px;height:21px;background:#fbfbfb;border:1px solid #dadada;border-radius:4px"></div>
<div class="t" style="left:59.23px;top:94px;font-size:12.5px;transform:scaleX(0.9661);color:#a2a2a2">Изменение строкового параметра</div>
<div class="t" style="left:61.00px;top:126px;font-size:12px;transform:scaleX(0.9153);color:#000">Параметр:</div>
<div class="t" style="left:63.80px;top:147px;font-size:12px;transform:scaleX(0.8770);color:#000">NetworkAddress</div>
<div class="t" style="left:61.00px;top:173px;font-size:12px;transform:scaleX(0.8912);color:#000">Значение:</div>
<div class="t" style="left:294.40px;top:225px;font-size:12px;transform:scaleX(0.8942);color:#000">OK</div>
<div class="t" style="left:363.10px;top:225px;font-size:12px;transform:scaleX(0.8990);color:#000">Отмена</div>
</body></html>
